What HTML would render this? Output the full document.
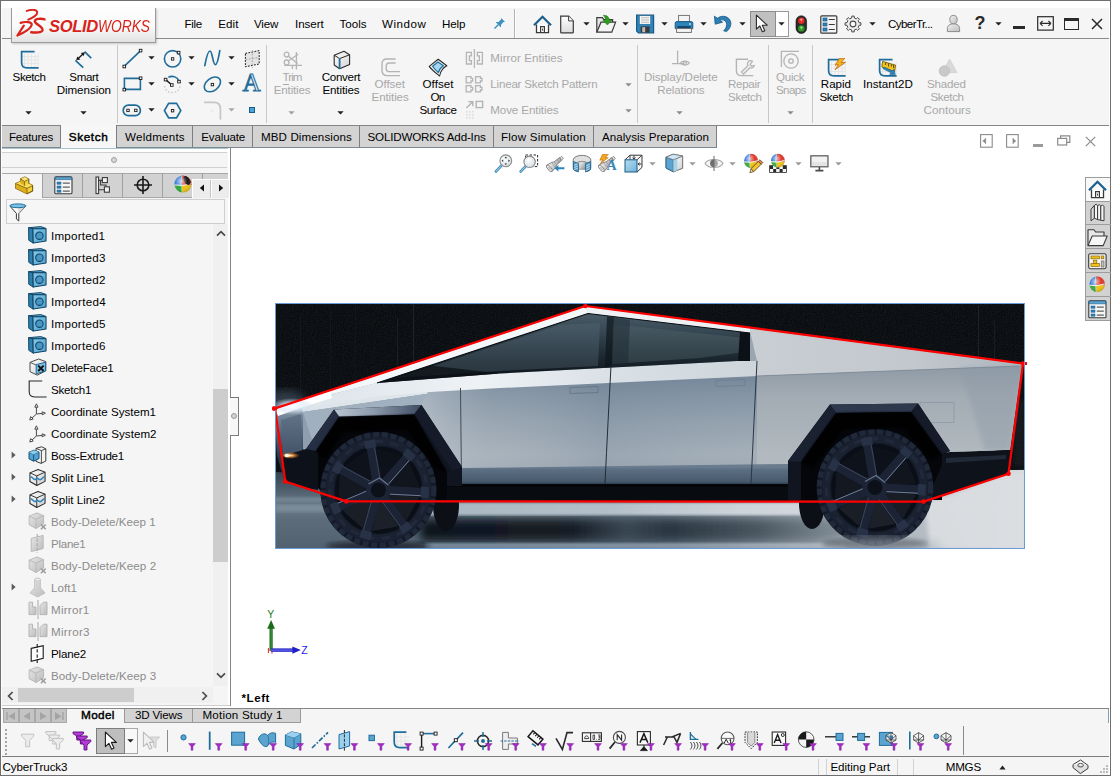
<!DOCTYPE html>
<html lang="en"><head><meta charset="utf-8"><title>SOLIDWORKS - CyberTruck3</title>
<style>
html,body{margin:0;padding:0;background:#fff;}
#app{position:relative;width:1111px;height:776px;overflow:hidden;background:#fff;font-family:"Liberation Sans",sans-serif;font-size:12px;color:#000;}
#app div,#app span,#app svg{position:absolute;box-sizing:border-box;}
.t{white-space:pre;line-height:16px;height:16px;}
.f5{background:#f5f5f5;}
.tab{background:#d3d3d3;border-right:1px solid #7e7e7e;}
.vsep{width:1px;background:#c8c8c8;}

</style></head>
<body>
<div id="app">
<!-- window frame -->
<div style="left:0;top:0;width:1111px;height:776px;border:1px solid #6f6f6f;"></div>
<!-- menu bar -->
<div class="f5" style="left:2px;top:8px;width:1108px;height:30px;"></div>
<div style="left:1px;top:38px;width:1109px;height:1px;background:#8a8a8a;"></div>
<!-- command manager -->
<div class="f5" style="left:2px;top:39px;width:1108px;height:86px;"></div>
<div style="left:1px;top:125px;width:1109px;height:1px;background:#858585;"></div>
<!-- logo box -->
<div style="left:11px;top:8px;width:145px;height:35px;border:1px solid #9a9a9a;border-top:none;background:linear-gradient(#fdfdfd 0%,#fafafa 55%,#e2e2e2 100%);box-shadow:1px 1px 2px rgba(0,0,0,.18);"></div>
<div style="left:38px;top:8px;width:1px;height:30px;background:#8a8a8a;display:none"></div>
<!-- menu separator -->
<div style="left:514px;top:9px;width:1px;height:29px;background:#b4b4b4;"></div>
<div style="left:515px;top:9px;width:1px;height:29px;background:#fff;"></div>
<!-- select button highlighted -->
<div style="left:750px;top:11px;width:39px;height:26px;border:1px solid #9a9a9a;background:#fff;"></div>
<div style="left:750px;top:11px;width:26px;height:26px;border:1px solid #8c8c8c;background:#c0c0c0;"></div>
<!-- CM separators -->
<div class="vsep" style="left:117px;top:45px;height:78px;"></div>
<div class="vsep" style="left:266px;top:45px;height:78px;"></div>
<div class="vsep" style="left:637px;top:45px;height:78px;"></div>
<div class="vsep" style="left:768px;top:45px;height:78px;"></div>
<div class="vsep" style="left:812px;top:45px;height:78px;"></div>
<!-- CM tabs row -->
<div style="left:1px;top:126px;width:1109px;height:22px;background:#fff;"></div>
<div class="tab" style="left:1px;top:126px;width:60px;height:21px;"></div>
<div class="tab" style="left:117px;top:126px;width:76px;height:21px;"></div>
<div class="tab" style="left:193px;top:126px;width:60px;height:21px;"></div>
<div class="tab" style="left:253px;top:126px;width:107px;height:21px;"></div>
<div class="tab" style="left:360px;top:126px;width:134px;height:21px;"></div>
<div class="tab" style="left:494px;top:126px;width:100px;height:21px;"></div>
<div class="tab" style="left:594px;top:126px;width:123px;height:21px;"></div>
<div style="left:1px;top:147px;width:716px;height:1px;background:#7e8890;"></div>
<div style="left:61px;top:125px;width:56px;height:24px;background:#f7f7f7;border-right:1px solid #7e7e7e;"></div>
<div style="left:2px;top:148px;width:226px;height:1px;background:#a9c4cf;"></div>
<!-- left panel -->
<div class="f5" style="left:1px;top:152px;width:228px;height:553px;"></div>
<div style="left:2px;top:152px;width:225px;height:1px;background:#d0d0d0;"></div>
<div style="left:2px;top:167px;width:225px;height:1px;background:#d0d0d0;"></div>
<div style="left:111px;top:157px;width:6px;height:6px;border-radius:50%;background:#d6d6d6;border:1px solid #a0a0a0;"></div>

<div style="left:228px;top:148px;width:2px;height:560px;background:#fff;"></div><div style="left:230px;top:148px;width:1px;height:560px;background:#858585;"></div>
<!-- splitter handle -->
<div style="left:230px;top:397px;width:9px;height:39px;border:1px solid #7a7a7a;border-left:none;background:#f7f7f7;"></div>
<div style="left:231px;top:413px;width:6px;height:6px;border-radius:50%;background:#d2d2d2;border:1px solid #9a9a9a;"></div>
<!-- FM icon tabs -->
<div style="left:2px;top:173px;width:226px;height:25px;background:#d2d2d2;border-top:1px solid #a8a8a8;border-bottom:1px solid #a8a8a8;"></div>
<div style="left:2px;top:173px;width:41px;height:26px;background:#f5f5f5;border-top:1px solid #a8a8a8;"></div>
<div style="left:42px;top:173px;width:1px;height:25px;background:#a0a0a0;"></div>
<div style="left:82px;top:173px;width:1px;height:25px;background:#a0a0a0;"></div>
<div style="left:122px;top:173px;width:1px;height:25px;background:#a0a0a0;"></div>
<div style="left:162px;top:173px;width:1px;height:25px;background:#a0a0a0;"></div>
<div style="left:202px;top:173px;width:1px;height:25px;background:#a0a0a0;"></div>
<div style="left:192px;top:179px;width:19px;height:19px;background:#f3f3f3;border:1px solid #b8b8b8;"></div>
<div style="left:210px;top:179px;width:18px;height:19px;background:#f3f3f3;border:1px solid #b8b8b8;"></div>
<!-- filter box -->
<div style="left:6px;top:199px;width:219px;height:25px;border:1px solid #cfcfcf;background:#f6f6f6;"></div>
<!-- tree scrollbar -->
<div style="left:213px;top:224px;width:15px;height:462px;background:#f0f0f0;"></div>
<div style="left:213px;top:389px;width:15px;height:173px;background:#cdcdcd;"></div>
<!-- tree h scrollbar -->
<div style="left:2px;top:687px;width:211px;height:16px;background:#f0f0f0;"></div>
<div style="left:18px;top:688px;width:116px;height:14px;background:#cdcdcd;"></div>
<!-- task pane tabs right -->
<div style="left:1085px;top:177px;width:25px;height:144px;background:#d2d2d2;border:1px solid #9c9c9c;border-right:none;"></div>
<div style="left:1086px;top:178px;width:24px;height:23px;background:#f8f8f8;"></div>
<div style="left:1085px;top:201px;width:26px;height:1px;background:#9c9c9c;"></div>
<div style="left:1085px;top:224px;width:26px;height:1px;background:#9c9c9c;"></div>
<div style="left:1085px;top:248px;width:26px;height:1px;background:#9c9c9c;"></div>
<div style="left:1085px;top:272px;width:26px;height:1px;background:#9c9c9c;"></div>
<div style="left:1085px;top:296px;width:26px;height:1px;background:#9c9c9c;"></div>
<!-- bottom area -->
<div class="f5" style="left:1px;top:706px;width:1109px;height:18px;"></div>
<div style="left:1px;top:705px;width:229px;height:1px;background:#cfcfcf;"></div>
<div style="left:1px;top:706px;width:229px;height:2px;background:#fff;"></div>
<div style="left:231px;top:706px;width:879px;height:2px;background:#fff;"></div>
<div style="left:1px;top:708px;width:1108px;height:1px;background:#858585;"></div>
<div style="left:1108px;top:709px;width:1px;height:14px;background:#7fa0b0;"></div>
<div style="left:124px;top:709px;width:69px;height:14px;background:#d3d3d3;border:1px solid #9a9a9a;border-top:none;"></div>
<div style="left:192px;top:709px;width:109px;height:14px;background:#d3d3d3;border:1px solid #9a9a9a;border-top:none;"></div>
<div class="f5" style="left:1px;top:724px;width:1109px;height:32px;"></div>
<div style="left:1px;top:756px;width:1109px;height:1px;background:#7c7c7c;"></div>
<div class="f5" style="left:1px;top:757px;width:1109px;height:18px;"></div>
<div style="left:1109px;top:126px;width:1px;height:51px;background:#fff;"></div><div style="left:1109px;top:321px;width:1px;height:387px;background:#fff;"></div>
<div style="left:283px;top:84px;width:6px;height:1px;background:#a8a8a8;"></div>
<div style="left:1px;top:1px;width:1px;height:774px;background:#fff;"></div>
<div style="left:1109px;top:1px;width:1px;height:125px;background:#fff;"></div>
<div style="left:1109px;top:709px;width:1px;height:66px;background:#fff;"></div>

<!-- sketch picture: truck -->
<svg style="left:275px;top:303px;width:750px;height:246px;" width="750" height="246" viewBox="275 303 750 246">
<defs>
<filter id="nz" x="0" y="0" width="100%" height="100%"><feTurbulence type="fractalNoise" baseFrequency="0.9" numOctaves="2" seed="3" result="n"/><feColorMatrix in="n" type="matrix" values="0 0 0 0 0.16  0 0 0 0 0.19  0 0 0 0 0.22  0.7 0.7 0.7 0 -0.82"/></filter>
<filter id="b1"><feGaussianBlur stdDeviation="1"/></filter>
<filter id="b2"><feGaussianBlur stdDeviation="2.2"/></filter>
<filter id="b4"><feGaussianBlur stdDeviation="4"/></filter>
<filter id="b8"><feGaussianBlur stdDeviation="8"/></filter>
<linearGradient id="gfloor" x1="0" y1="0" x2="0" y2="1"><stop offset="0" stop-color="#33404c"/><stop offset=".22" stop-color="#4b5a69"/><stop offset=".46" stop-color="#6d7d8a"/><stop offset=".62" stop-color="#5c6c7a"/><stop offset="1" stop-color="#526170"/></linearGradient>
<linearGradient id="gfloorR" x1="0" y1="0" x2="1" y2="0"><stop offset="0" stop-color="#cfd4d9" stop-opacity="0"/><stop offset=".55" stop-color="#cfd4d9" stop-opacity=".6"/><stop offset="1" stop-color="#d8dbdf" stop-opacity="1"/></linearGradient>
<linearGradient id="gside" x1="0" y1="376" x2="0" y2="468" gradientUnits="userSpaceOnUse"><stop offset="0" stop-color="#74869a"/><stop offset=".2" stop-color="#8494a4"/><stop offset=".5" stop-color="#97a4b0"/><stop offset=".85" stop-color="#a9b3bc"/><stop offset="1" stop-color="#a5afb9"/></linearGradient>
<linearGradient id="gside2" x1="420" y1="0" x2="1020" y2="0" gradientUnits="userSpaceOnUse"><stop offset="0" stop-color="#c8d0d8" stop-opacity=".55"/><stop offset=".12" stop-color="#aab4be" stop-opacity=".15"/><stop offset=".3" stop-color="#6d8094" stop-opacity=".25"/><stop offset=".55" stop-color="#8494a4" stop-opacity=".12"/><stop offset="1" stop-color="#c0c6cc" stop-opacity=".4"/></linearGradient>
<linearGradient id="grear" x1="0" y1="366" x2="0" y2="455" gradientUnits="userSpaceOnUse"><stop offset="0" stop-color="#8f9aa5"/><stop offset=".35" stop-color="#a3acb4"/><stop offset="1" stop-color="#b2b9bf"/></linearGradient>
<linearGradient id="gupper" x1="750" y1="0" x2="1022" y2="0" gradientUnits="userSpaceOnUse"><stop offset="0" stop-color="#c9ced3"/><stop offset=".6" stop-color="#c2c8cd"/><stop offset="1" stop-color="#aeb6be"/></linearGradient>
<linearGradient id="gband" x1="330" y1="0" x2="760" y2="0" gradientUnits="userSpaceOnUse"><stop offset="0" stop-color="#dfe6ec"/><stop offset=".35" stop-color="#eef2f5"/><stop offset=".65" stop-color="#d9e0e6"/><stop offset="1" stop-color="#cdd4da"/></linearGradient>
<linearGradient id="glow" x1="0" y1="467" x2="0" y2="485" gradientUnits="userSpaceOnUse"><stop offset="0" stop-color="#6a7c8e"/><stop offset=".15" stop-color="#5c6e82"/><stop offset=".8" stop-color="#485a6e"/><stop offset="1" stop-color="#2a3846"/></linearGradient>
<linearGradient id="gwin" x1="0" y1="313" x2="0" y2="375" gradientUnits="userSpaceOnUse"><stop offset="0" stop-color="#4a5c68"/><stop offset=".35" stop-color="#33444f"/><stop offset=".7" stop-color="#1c2931"/><stop offset="1" stop-color="#0e161c"/></linearGradient>
<linearGradient id="gfas" x1="0" y1="408" x2="0" y2="458" gradientUnits="userSpaceOnUse"><stop offset="0" stop-color="#c5d2de"/><stop offset=".15" stop-color="#77889a"/><stop offset=".6" stop-color="#4d5d70"/><stop offset="1" stop-color="#2b3644"/></linearGradient>
<radialGradient id="gtyre"><stop offset="0" stop-color="#0b0f16"/><stop offset=".55" stop-color="#10151e"/><stop offset=".62" stop-color="#1b2230"/><stop offset=".8" stop-color="#232c3c"/><stop offset=".93" stop-color="#1c2432"/><stop offset="1" stop-color="#0d1118"/></radialGradient>
<radialGradient id="gglare"><stop offset="0" stop-color="#fff" stop-opacity="1"/><stop offset=".4" stop-color="#e8f2ff" stop-opacity=".8"/><stop offset="1" stop-color="#bcd" stop-opacity="0"/></radialGradient>
<radialGradient id="gorange"><stop offset="0" stop-color="#fff4d8"/><stop offset=".35" stop-color="#f6a14a" stop-opacity=".9"/><stop offset="1" stop-color="#c45a10" stop-opacity="0"/></radialGradient>
<linearGradient id="gstrip" x1="425" y1="0" x2="845" y2="0" gradientUnits="userSpaceOnUse"><stop offset="0" stop-color="#a9b7c2"/><stop offset=".45" stop-color="#b4c0c9"/><stop offset=".75" stop-color="#cdd4da"/><stop offset="1" stop-color="#d4d9de"/></linearGradient>
<linearGradient id="gstrip2" x1="425" y1="0" x2="845" y2="0" gradientUnits="userSpaceOnUse"><stop offset="0" stop-color="#77899a"/><stop offset=".6" stop-color="#8a99a6"/><stop offset="1" stop-color="#b4bcc4"/></linearGradient>
<linearGradient id="gshad" x1="420" y1="0" x2="850" y2="0" gradientUnits="userSpaceOnUse"><stop offset="0" stop-color="#0f161e"/><stop offset=".35" stop-color="#141c25"/><stop offset=".48" stop-color="#3a4753"/><stop offset=".58" stop-color="#2a3641"/><stop offset=".78" stop-color="#48555f"/><stop offset="1" stop-color="#8a959e"/></linearGradient>
<linearGradient id="gfl" x1="334" y1="0" x2="421" y2="0" gradientUnits="userSpaceOnUse"><stop offset="0" stop-color="#b9c5d0"/><stop offset=".45" stop-color="#8d9bad"/><stop offset="1" stop-color="#3f4c63"/></linearGradient>
</defs>
<rect x="275" y="303" width="750" height="246" fill="#090c0f"/>
<rect x="275" y="303" width="750" height="200" filter="url(#nz)" opacity=".2"/>
<rect x="397" y="318" width="1" height="48" fill="#5a6670" opacity="0.18"/>
<rect x="413" y="304" width="1" height="64" fill="#5a6670" opacity="0.24"/>
<rect x="300" y="315" width="1" height="85" fill="#5a6670" opacity="0.1"/>
<rect x="330" y="310" width="1" height="85" fill="#5a6670" opacity="0.08"/>
<rect x="978" y="305" width="1" height="55" fill="#5a6670" opacity="0.22"/>
<rect x="994" y="320" width="1" height="42" fill="#5a6670" opacity="0.16"/>
<rect x="355" y="305" width="1" height="75" fill="#5a6670" opacity="0.06"/>
<ellipse cx="286" cy="404" rx="20" ry="14" fill="#52667a" opacity=".5" filter="url(#b4)"/>
<polygon points="275,472 330,474 1025,470 1025,549 275,549" fill="url(#gfloor)"/>
<rect x="275" y="505" width="60" height="7" fill="#8fa0ad" opacity=".5" filter="url(#b2)"/>
<rect x="275" y="497" width="48" height="5" fill="#8294a4" opacity=".5" filter="url(#b1)"/>
<rect x="640" y="470" width="385" height="79" fill="url(#gfloorR)"/>
<polygon points="925,503 1009,474 1025,472 1025,549 930,549" fill="#dcdfe2" opacity=".9" filter="url(#b2)"/>
<rect x="425" y="503" width="420" height="12" fill="url(#gstrip)" filter="url(#b1)"/>
<rect x="420" y="519" width="430" height="22" fill="url(#gshad)" filter="url(#b4)"/>
<rect x="425" y="543" width="420" height="6" fill="url(#gstrip2)" opacity=".9" filter="url(#b1)"/>
<ellipse cx="446" cy="505" rx="13" ry="26" fill="#0c1016"/>
<ellipse cx="812" cy="503" rx="13" ry="26" fill="#0c1016"/>
<rect x="1014" y="400" width="11" height="66" fill="#1a2026" opacity=".6" filter="url(#b2)"/>
<polygon points="276,409 585.5,306.5 1022.5,364 1010,450 950,452 788,484 461,485 303,458 277,456" fill="#9aa5af"/>
<polygon points="276,409 303,401 304,458 285,482 277,456" fill="url(#gfas)"/>
<polygon points="281,420 301,414 302,452 283,455" fill="#52637a" opacity=".6"/>
<polygon points="276,409 585.5,306.5 589,313 377,383 300,402 277,414" fill="#f4f7f9"/>
<polygon points="300,402 377,383 500,373 500,386 440,392 303,412" fill="#dde5eb"/>
<polygon points="303,412 440,392 500,386 500,404 334,410 306,449 303,449" fill="#8e9eae"/>
<polygon points="303,412 440,392 470,390 420,405.5 334,410 312,440" fill="#a9b8c6" opacity=".7"/>
<polygon points="421,405 430,388 500,386 757,376 790,375 790,466 461,468" fill="url(#gside)"/>
<polygon points="421,405 430,388 500,386 757,376 790,375 790,466 461,468" fill="url(#gside2)"/>
<polygon points="377,383 500,373.5 737,361 757,361 757,376 500,388 430,392 372,397 330,404 303,411 303,402" fill="url(#gband)"/>
<polygon points="585.5,306.5 1022.5,364 1021,366 757,376 757,361 750,331 589,313" fill="url(#gupper)"/>
<polygon points="585.5,306.5 750,328.5 750,333 589,313.5" fill="#eef1f3"/>
<polygon points="757,376 1021,366 1010,450 950,452 918,404 830,405 788,462 788,484 757,484" fill="url(#grear)"/>
<polygon points="960,368 1021,366 1010,450 985,451" fill="#8e9ba8" opacity=".45" filter="url(#b2)"/>
<polygon points="461,468 620,466 790,464 790,485 461,485" fill="url(#glow)"/>
<polygon points="440,484 800,484 800,502 440,502" fill="#080b10"/>
<rect x="440" y="484" width="360" height="3" fill="#04060a"/>
<polygon points="377,383 588,313.5 750,333 750,360.5 737,361 500,373.5" fill="url(#gwin)"/>
<polygon points="395,378 560,325 600,323 598,366 500,371" fill="#5b6e7a" opacity=".35"/>
<polygon points="612,324 745,338 745,352 700,358 612,364" fill="#55666f" opacity=".4"/>
<polygon points="607,316.5 614,317.5 612,367 605,367.5" fill="#0d151b" opacity=".7"/><polygon points="614,317.5 630,320 628,366 612,367" fill="#1a262e" opacity=".45"/>
<polygon points="377,383 430,365.5 470,370 500,373.5" fill="#0a1014" opacity=".7"/>
<polygon points="740,332 750,333 750,361 738,361" fill="#0b1116"/>
<polyline points="377,383 588,313.5 750,333" fill="none" stroke="#0a0f14" stroke-width="1.2"/>
<path d="M460.5,388 L461.5,484" stroke="#3e4c59" stroke-width="1" fill="none"/>
<path d="M611,366 Q608,420 605,484" stroke="#222d38" stroke-width="1" fill="none"/>
<path d="M757,361 Q754,420 751,484" stroke="#2a3642" stroke-width="1" fill="none"/>
<rect x="570" y="387" width="28" height="6" fill="none" stroke="#5d6f80" stroke-width=".7" transform="rotate(-2 584 390)"/>
<rect x="716" y="380" width="29" height="6" fill="none" stroke="#6d7e8e" stroke-width=".7" transform="rotate(-2 730 383)"/>
<rect x="920" y="402.5" width="34" height="20" fill="none" stroke="#8c98a3" stroke-width=".8"/>
<line x1="757" y1="376" x2="1021" y2="366" stroke="#7b8894" stroke-width=".8"/>
<polygon points="306,449 334,409.5 421.5,405 462,467 462,486 440,486 440,470 412,418 340,421 318,452 312,486 306,486" fill="#10151f"/>
<polygon points="334,409.5 421.5,405 414,414.5 339,416.5" fill="url(#gfl)"/>
<polygon points="306,449 334,409.5 339,416.5 316,451" fill="#252e42"/>
<polygon points="421.5,405 462,467 453,471 414,414.5" fill="#151b29"/>
<polygon points="316,451 339,417.5 414,414.5 447,472 447,500 330,500 316,486" fill="#04060a"/>
<polygon points="283,456 306,449 318,452 318,490 300,487 285,482" fill="#0d1119"/>
<polygon points="788,461 830,404.5 918,403.5 950,451 944,454 1010,450 1008.5,474 925,502 800,502 788,502" fill="#10151f"/>
<polygon points="830,404.5 918,403.5 911,412 836,413" fill="#2e394e"/>
<polygon points="788,461 830,404.5 836,413 801,462" fill="#1a2131"/>
<polygon points="918,403.5 950,451 942,454 911,412" fill="#151b29"/>
<polygon points="801,462 836,413 911,412 942,455 942,500 801,500" fill="#04060a"/>
<polygon points="944,454 1010,450 1008.5,474 925,502 940,470" fill="#0e121b"/>
<polygon points="946,458 1006,455 1006,459 946,463" fill="#2a3345" opacity=".7"/>
<g>
<ellipse cx="378.4" cy="546" rx="52.2" ry="5" fill="#0a0e14" opacity=".6" filter="url(#b2)"/>
<circle cx="378.4" cy="490" r="58" fill="#131926"/>
<circle cx="378.4" cy="490" r="55.4" fill="none" stroke="#20293a" stroke-width="5.2" stroke-dasharray="6.2 2.6"/>
<circle cx="378.4" cy="490" r="48.5" fill="none" stroke="#1a2130" stroke-width="8"/>
<circle cx="378.4" cy="490" r="48.5" fill="none" stroke="#262f43" stroke-width="3" stroke-dasharray="9 7" opacity=".6"/>
<circle cx="378.4" cy="490" r="43.5" fill="#0a0e16"/>
<polygon points="376.1,448.6 401.9,455.8 383.7,478.1 380.0,477.1" fill="#0c111a"/>
<polygon points="409.4,462.4 419.8,487.1 391.0,486.8 389.5,483.2" fill="#10151e"/>
<polygon points="419.3,497.0 406.5,520.6 388.8,497.8 390.6,494.5" fill="#171c25"/>
<polygon points="398.4,526.4 372.0,531.0 378.7,503.0 382.5,502.3" fill="#1b2029"/>
<polygon points="362.5,528.3 342.4,510.6 368.4,498.4 371.3,500.9" fill="#191e27"/>
<polygon points="338.5,501.4 339.8,474.7 365.7,487.4 365.5,491.3" fill="#131821"/>
<polygon points="344.6,465.9 366.4,450.3 372.5,478.4 369.3,480.7" fill="#0d121b"/>
<line x1="376.8" y1="481.1" x2="370.7" y2="446.2" stroke="#1b2334" stroke-width="9"/>
<line x1="380.4" y1="480.5" x2="374.2" y2="445.6" stroke="#8a9bb4" stroke-width="1" opacity="0.3"/>
<rect x="366.3" y="438.7" width="8" height="11" fill="#283247" transform="rotate(-100.0 370.3 444.2)"/>
<line x1="384.4" y1="483.3" x2="407.8" y2="456.6" stroke="#1b2334" stroke-width="9"/>
<line x1="387.1" y1="485.6" x2="410.5" y2="459.0" stroke="#8a9bb4" stroke-width="1" opacity="0.75"/>
<rect x="405.2" y="449.6" width="8" height="11" fill="#283247" transform="rotate(-48.6 409.2 455.1)"/>
<line x1="387.4" y1="490.4" x2="422.8" y2="492.2" stroke="#1b2334" stroke-width="9"/>
<line x1="387.2" y1="494.0" x2="422.7" y2="495.8" stroke="#8a9bb4" stroke-width="1" opacity="0.75"/>
<rect x="420.8" y="486.8" width="8" height="11" fill="#283247" transform="rotate(2.9 424.8 492.3)"/>
<line x1="383.7" y1="497.3" x2="404.4" y2="526.1" stroke="#1b2334" stroke-width="9"/>
<line x1="380.7" y1="499.4" x2="401.5" y2="528.2" stroke="#8a9bb4" stroke-width="1" opacity="0.3"/>
<rect x="401.5" y="522.3" width="8" height="11" fill="#283247" transform="rotate(54.3 405.5 527.8)"/>
<line x1="376.0" y1="498.7" x2="366.3" y2="532.8" stroke="#1b2334" stroke-width="9"/>
<line x1="372.5" y1="497.7" x2="362.9" y2="531.9" stroke="#8a9bb4" stroke-width="1" opacity="0.3"/>
<rect x="361.8" y="529.3" width="8" height="11" fill="#283247" transform="rotate(105.7 365.8 534.8)"/>
<line x1="370.1" y1="493.5" x2="337.4" y2="507.3" stroke="#1b2334" stroke-width="9"/>
<line x1="368.7" y1="490.2" x2="336.0" y2="504.0" stroke="#8a9bb4" stroke-width="1" opacity="0.75"/>
<rect x="331.6" y="502.6" width="8" height="11" fill="#283247" transform="rotate(157.1 335.6 508.1)"/>
<line x1="370.5" y1="485.7" x2="339.3" y2="468.7" stroke="#1b2334" stroke-width="9"/>
<line x1="372.2" y1="482.5" x2="341.0" y2="465.6" stroke="#8a9bb4" stroke-width="1" opacity="0.3"/>
<rect x="333.6" y="462.3" width="8" height="11" fill="#283247" transform="rotate(208.6 337.6 467.8)"/>
<polygon points="381.9,477.5 390.4,485.0 389.8,496.2 380.7,502.8 369.8,499.7 365.4,489.4 370.8,479.4" fill="#1c2435"/>
<circle cx="378.4" cy="490" r="7.5" fill="#0c1119"/>
<path d="M368.4,484 L379.4,478 L388.4,485" stroke="#7d90aa" stroke-width="1.3" fill="none" opacity=".75"/>
</g>
<g>
<ellipse cx="875" cy="543.8" rx="52.47" ry="5" fill="#0a0e14" opacity=".6" filter="url(#b2)"/>
<circle cx="875" cy="487.5" r="58.3" fill="#131926"/>
<circle cx="875" cy="487.5" r="55.699999999999996" fill="none" stroke="#20293a" stroke-width="5.2" stroke-dasharray="6.2 2.6"/>
<circle cx="875" cy="487.5" r="48.8" fill="none" stroke="#1a2130" stroke-width="8"/>
<circle cx="875" cy="487.5" r="48.8" fill="none" stroke="#262f43" stroke-width="3" stroke-dasharray="9 7" opacity=".6"/>
<circle cx="875" cy="487.5" r="43.8" fill="#0a0e16"/>
<polygon points="872.7,445.8 898.7,453.1 880.3,475.6 876.6,474.6" fill="#0c111a"/>
<polygon points="906.2,459.7 916.7,484.6 887.6,484.3 886.1,480.7" fill="#10151e"/>
<polygon points="916.2,494.6 903.3,518.3 885.4,495.3 887.2,492.0" fill="#171c25"/>
<polygon points="895.2,524.1 868.6,528.8 875.3,500.5 879.1,499.8" fill="#1b2029"/>
<polygon points="858.9,526.1 838.7,508.2 865.0,495.9 867.9,498.4" fill="#191e27"/>
<polygon points="834.8,499.0 836.2,472.0 862.3,484.9 862.1,488.8" fill="#131821"/>
<polygon points="840.9,463.3 862.9,447.5 869.1,475.9 865.9,478.2" fill="#0d121b"/>
<line x1="873.4" y1="478.6" x2="867.2" y2="443.4" stroke="#1b2334" stroke-width="9"/>
<line x1="877.0" y1="478.0" x2="870.8" y2="442.8" stroke="#8a9bb4" stroke-width="1" opacity="0.3"/>
<rect x="862.9" y="435.9" width="8" height="11" fill="#283247" transform="rotate(-100.0 866.9 441.4)"/>
<line x1="881.0" y1="480.8" x2="904.6" y2="453.9" stroke="#1b2334" stroke-width="9"/>
<line x1="883.7" y1="483.1" x2="907.3" y2="456.3" stroke="#8a9bb4" stroke-width="1" opacity="0.75"/>
<rect x="902.0" y="446.9" width="8" height="11" fill="#283247" transform="rotate(-48.6 906.0 452.4)"/>
<line x1="884.0" y1="487.9" x2="919.7" y2="489.7" stroke="#1b2334" stroke-width="9"/>
<line x1="883.8" y1="491.5" x2="919.6" y2="493.3" stroke="#8a9bb4" stroke-width="1" opacity="0.75"/>
<rect x="917.7" y="484.3" width="8" height="11" fill="#283247" transform="rotate(2.9 921.7 489.8)"/>
<line x1="880.3" y1="494.8" x2="901.2" y2="523.9" stroke="#1b2334" stroke-width="9"/>
<line x1="877.3" y1="496.9" x2="898.2" y2="526.0" stroke="#8a9bb4" stroke-width="1" opacity="0.3"/>
<rect x="898.3" y="520.0" width="8" height="11" fill="#283247" transform="rotate(54.3 902.3 525.5)"/>
<line x1="872.6" y1="496.2" x2="862.9" y2="530.6" stroke="#1b2334" stroke-width="9"/>
<line x1="869.1" y1="495.2" x2="859.4" y2="529.7" stroke="#8a9bb4" stroke-width="1" opacity="0.3"/>
<rect x="858.3" y="527.1" width="8" height="11" fill="#283247" transform="rotate(105.7 862.3 532.6)"/>
<line x1="866.7" y1="491.0" x2="833.7" y2="504.9" stroke="#1b2334" stroke-width="9"/>
<line x1="865.3" y1="487.7" x2="832.3" y2="501.6" stroke="#8a9bb4" stroke-width="1" opacity="0.75"/>
<rect x="827.9" y="500.2" width="8" height="11" fill="#283247" transform="rotate(157.1 831.9 505.7)"/>
<line x1="867.1" y1="483.2" x2="835.7" y2="466.1" stroke="#1b2334" stroke-width="9"/>
<line x1="868.8" y1="480.0" x2="837.4" y2="462.9" stroke="#8a9bb4" stroke-width="1" opacity="0.3"/>
<rect x="829.9" y="459.6" width="8" height="11" fill="#283247" transform="rotate(208.6 833.9 465.1)"/>
<polygon points="878.5,475.0 887.0,482.5 886.4,493.7 877.3,500.3 866.4,497.2 862.0,486.9 867.4,476.9" fill="#1c2435"/>
<circle cx="875" cy="487.5" r="7.5" fill="#0c1119"/>
<path d="M865,481.5 L876,475.5 L885,482.5" stroke="#7d90aa" stroke-width="1.3" fill="none" opacity=".75"/>
</g>
<polygon points="316,451 339,417.5 414,414.5 447,472 434,468 407,430 344,432 324,460" fill="#020305" opacity=".75" filter="url(#b1)"/>
<polygon points="801,462 836,413 911,412 942,455 930,460 903,428 843,429 813,468" fill="#020305" opacity=".75" filter="url(#b1)"/>
<ellipse cx="880" cy="546" rx="62" ry="9" fill="#a7b2bb" opacity=".55" filter="url(#b4)"/>
<polygon points="276,409 330,391 332,398 300,408 278,416" fill="#ffffff"/>
<ellipse cx="292" cy="406" rx="22" ry="8" fill="url(#gglare)"/>
<ellipse cx="290" cy="455.5" rx="10" ry="3.4" fill="url(#gorange)"/>
<ellipse cx="287" cy="455.5" rx="2.6" ry="1.8" fill="#fff6e0"/>
<polygon points="275,408.5 585.3,306 1023,363.5 1008.5,473.7 923.6,501.6 346.3,501.4 285.3,481.5" fill="none" stroke="#ff0000" stroke-width="2.2" stroke-linejoin="round"/>
<circle cx="275" cy="408.5" r="2.3" fill="#ff0000"/>
<circle cx="585.3" cy="306" r="2.3" fill="#ff0000"/>
<circle cx="1023" cy="363.5" r="2.3" fill="#ff0000"/>
<circle cx="1008.5" cy="473.7" r="2.3" fill="#ff0000"/>
<circle cx="923.6" cy="501.6" r="2.3" fill="#ff0000"/>
<circle cx="346.3" cy="501.4" r="2.3" fill="#ff0000"/>
<circle cx="285.3" cy="481.5" r="2.3" fill="#ff0000"/>
</svg>
<div style="left:275px;top:303px;width:750px;height:246px;border:1px solid #6a9bd8;"></div>
<div style="left:272px;top:406px;width:4px;height:5px;border-radius:2px;background:#f00;"></div>
<div style="left:1025px;top:362px;width:2px;height:3px;background:#f00;"></div>
<!-- logo -->
<svg style="left:16px;top:9px" width="31" height="29" viewBox="0 0 31 29" ><g fill="none" stroke="#d8241b" stroke-linecap="round" stroke-linejoin="round">
<path d="M10.8,1.9 C15,0.3 20.3,0.4 21.1,2.8 C21.8,5.4 17,8.6 12.3,10.6" stroke-width="2"/>
<path d="M4.6,13.9 C9,12.4 16.3,12.8 15.7,15.6 C15,19.6 7.5,24.2 1.4,26.5 L7.8,16.6" stroke-width="2.2"/>
<path d="M28.6,10.3 C24.5,9 18.8,9.9 18.8,12.3 C19,15.2 27.4,17.6 26.5,21.3 C25.8,23.5 19.5,23.9 15.2,23.3" stroke-width="2.4"/>
</g></svg>
<span class="t" style="left:49px;top:17px;font-size:16.6px;line-height:20px;height:20px;font-weight:700;font-style:italic;color:#d8241b;letter-spacing:-.35px;">SOLID</span>
<span class="t" style="left:98.2px;top:17px;font-size:16.6px;line-height:20px;height:20px;font-style:italic;color:#d8241b;transform-origin:0 0;transform:scaleX(.83);">WORKS</span>
<!-- menubar icons -->
<svg style="left:492px;top:17px" width="14" height="14" viewBox="0 0 14 14" ><g transform="rotate(45 7 7)"><path d="M4.2,1.2h5.6l-1,1.2v3.4l2,2.2H3.2l2-2.2V2.4z" fill="#3d90c2"/><path d="M7,8v5.4" stroke="#3d90c2" stroke-width="1.5"/></g></svg>
<svg style="left:532.5px;top:14.5px" width="19" height="19" viewBox="0 0 19 19" ><path d="M3.5,9.5V17.6h12V9.5" fill="#fff" stroke="#3a3a3a" stroke-width="1.3"/><path d="M7.6,17.4v-5.8h3.8v5.8" fill="none" stroke="#3a3a3a" stroke-width="1.2"/><path d="M9.6,13.6v2" stroke="#3a3a3a" stroke-width="1"/><path d="M1,10.2L9.5,1.8L18,10.2" fill="none" stroke="#1d5f8d" stroke-width="2.3" stroke-linejoin="miter"/></svg>
<svg style="left:559px;top:15px" width="16" height="19" viewBox="0 0 16 19" ><defs><linearGradient id="gdoc" x1="0" y1="0" x2="0" y2="1"><stop offset="0" stop-color="#fff"/><stop offset="1" stop-color="#dcdcdc"/></linearGradient></defs><path d="M1.7,1.2H9.6L14.3,5.9V17.2Q14.3,17.8 13.7,17.8H2.3Q1.7,17.8 1.7,17.2z" fill="url(#gdoc)" stroke="#3a3a3a" stroke-width="1.2"/><path d="M9.6,1.2V5.9H14.3" fill="#fff" stroke="#3a3a3a" stroke-width="1"/></svg>
<svg style="left:583.0px;top:22.0px" width="7" height="4" viewBox="0 0 7 4"><path d="M0.3,0.2h6.4L3.5,3.6z" fill="#222"/></svg>
<svg style="left:595px;top:14px" width="22" height="20" viewBox="0 0 22 20" ><path d="M1.8,18V3.6h5.6l1.6,2h8.6V8" fill="#e6e6e6" stroke="#3a3a3a" stroke-width="1.2"/><path d="M1.8,18.2L6,8.2H20.6L16.8,18.2z" fill="#f4f4f4" stroke="#3a3a3a" stroke-width="1.2"/><path d="M8.2,1.4C12,1 14,3 14.4,6.2H17L12.4,11L7.8,6.2H10.6C10.4,4 9.6,2.4 8.2,1.4z" fill="#2f9a1f" stroke="#1f7a12" stroke-width=".5"/></svg>
<svg style="left:622.0px;top:22.0px" width="7" height="4" viewBox="0 0 7 4"><path d="M0.3,0.2h6.4L3.5,3.6z" fill="#222"/></svg>
<svg style="left:635px;top:14px" width="20" height="20" viewBox="0 0 20 20" ><path d="M1.6,1.2H18.6V18.8H3.4L1.6,17z" fill="#2c84ba" stroke="#1a5a86" stroke-width="1.2"/><rect x="4.4" y="1.8" width="11.2" height="8.4" fill="#fbfbfb" stroke="#1a5a86" stroke-width=".5"/><path d="M6,3.8h8M6,6h8M6,8.2h8" stroke="#9a9a9a" stroke-width=".7"/><rect x="5.6" y="12.4" width="9" height="6.2" fill="#3a3a3a"/><rect x="7.2" y="13.2" width="3" height="5" fill="#b9b9b9"/></svg>
<svg style="left:661.0px;top:22.0px" width="7" height="4" viewBox="0 0 7 4"><path d="M0.3,0.2h6.4L3.5,3.6z" fill="#222"/></svg>
<svg style="left:674px;top:14px" width="20" height="20" viewBox="0 0 20 20" ><rect x="4.6" y="1.4" width="10.8" height="7" fill="#f4f4f4" stroke="#6a6a6a" stroke-width=".9"/><path d="M1.2,9.2Q1.2,7.6 2.8,7.6H17.2Q18.8,7.6 18.8,9.2V14.6H1.2z" fill="#2c84ba" stroke="#1a5a86" stroke-width="1"/><rect x="3.4" y="12" width="13.2" height="3" fill="#15476b"/><rect x="2.6" y="14.6" width="14.8" height="3.8" fill="#f4f4f4" stroke="#6a6a6a" stroke-width=".9"/><rect x="15" y="9.4" width="2" height="1.2" fill="#cfe8f6"/></svg>
<svg style="left:700.0px;top:22.0px" width="7" height="4" viewBox="0 0 7 4"><path d="M0.3,0.2h6.4L3.5,3.6z" fill="#222"/></svg>
<svg style="left:713px;top:14px" width="20" height="19" viewBox="0 0 20 19" ><path d="M1.4,2.2L2.2,10.2L9.6,8.2L6.9,6.3C10.6,4.6 14.6,7.6 13.4,12.2C13,13.8 12,15.4 10.6,16.8L13.6,17.6C16.6,15.2 18.6,11.4 17.6,7.6C16.2,2.6 9.6,0.4 4.4,4.2z" fill="#2c7fb3" stroke="#1a5a86" stroke-width=".8" stroke-linejoin="round"/></svg>
<svg style="left:738.5px;top:22.0px" width="7" height="4" viewBox="0 0 7 4"><path d="M0.3,0.2h6.4L3.5,3.6z" fill="#222"/></svg>
<svg style="left:755px;top:14px" width="14" height="19" viewBox="0 0 14 19" ><path d="M1.4,1.2V15.2L4.8,12L7.4,17.8L9.8,16.7L7.3,11.2H12.2z" fill="#fff" stroke="#2a2a2a" stroke-width="1.1" stroke-linejoin="round"/></svg>
<svg style="left:778.0px;top:22.0px" width="7" height="4" viewBox="0 0 7 4"><path d="M0.3,0.2h6.4L3.5,3.6z" fill="#222"/></svg>
<svg style="left:795px;top:14.5px" width="13" height="19" viewBox="0 0 13 19" ><rect x="1" y=".8" width="10.6" height="17.6" rx="5.2" fill="#2b2b2b" stroke="#111" stroke-width=".6"/><circle cx="6.3" cy="5.7" r="3.2" fill="#e02a1f"/><circle cx="6.3" cy="13.4" r="3.2" fill="#2c9a22"/><path d="M6.3,3.4v3M5,4.6h2.6" stroke="#ffb0a8" stroke-width=".8"/><path d="M6.3,11.2v3M5,12.4h2.6" stroke="#a8e8a0" stroke-width=".8"/></svg>
<svg style="left:819.5px;top:14.5px" width="18" height="19" viewBox="0 0 18 19" ><rect x=".8" y=".8" width="16" height="17.4" rx="1" fill="#f4f4f4" stroke="#3a3a3a" stroke-width="1.2"/><g fill="#2c84ba" stroke="#1a5a86" stroke-width=".7"><rect x="3" y="3" width="4" height="3"/><rect x="3" y="8" width="4" height="3"/><rect x="3" y="13" width="4" height="3"/></g><path d="M8.8,4.5h6M8.8,9.5h6M8.8,14.5h6" stroke="#3a3a3a" stroke-width="1.1"/></svg>
<svg style="left:844px;top:15px" width="18" height="18" viewBox="0 0 18 18" ><path d="M14.96,7.69 L16.91,7.81 L16.91,10.19 L14.96,10.31 L14.14,12.29 L15.44,13.75 L13.75,15.44 L12.29,14.14 L10.31,14.96 L10.19,16.91 L7.81,16.91 L7.69,14.96 L5.71,14.14 L4.25,15.44 L2.56,13.75 L3.86,12.29 L3.04,10.31 L1.09,10.19 L1.09,7.81 L3.04,7.69 L3.86,5.71 L2.56,4.25 L4.25,2.56 L5.71,3.86 L7.69,3.04 L7.81,1.09 L10.19,1.09 L10.31,3.04 L12.29,3.86 L13.75,2.56 L15.44,4.25 L14.14,5.71z" fill="#f0f0f0" stroke="#4a4a4a" stroke-width="1" stroke-linejoin="round"/><circle cx="9" cy="9" r="2.9" fill="#f8f8f8" stroke="#4a4a4a" stroke-width="1.1"/></svg>
<svg style="left:869.0px;top:22.0px" width="7" height="4" viewBox="0 0 7 4"><path d="M0.3,0.2h6.4L3.5,3.6z" fill="#222"/></svg>
<svg style="left:946px;top:14px" width="15" height="19" viewBox="0 0 15 19" ><defs><linearGradient id="gusr" x1="0" y1="0" x2="1" y2="1"><stop offset="0" stop-color="#f2f2f2"/><stop offset="1" stop-color="#bdbdbd"/></linearGradient></defs><path d="M1.4,17.6V14.4C1.4,11.4 4,9.8 7.5,9.8S13.6,11.4 13.6,14.4V17.6z" fill="url(#gusr)" stroke="#8c8c8c" stroke-width="1"/><ellipse cx="7.5" cy="5.6" rx="3.7" ry="4.2" fill="url(#gusr)" stroke="#8c8c8c" stroke-width="1"/></svg>
<span class="t" style="left:974.5px;top:12px;font-size:18px;line-height:22px;height:22px;font-weight:700;color:#2a2a2a;">?</span>
<svg style="left:994.5px;top:22.0px" width="7" height="4" viewBox="0 0 7 4"><path d="M0.3,0.2h6.4L3.5,3.6z" fill="#222"/></svg>
<div style="left:1013px;top:26px;width:12px;height:3px;background:#2a2a2a;"></div>
<svg style="left:1037px;top:16px" width="17" height="15" viewBox="0 0 17 15" ><rect x=".7" y=".7" width="15.6" height="13.4" fill="none" stroke="#2a2a2a" stroke-width="1.2"/><path d="M3,7.4h11M3,7.4l2.6,-2.4M3,7.4l2.6,2.4M14,7.4l-2.6,-2.4M14,7.4l-2.6,2.4" stroke="#2a2a2a" stroke-width="1.1" fill="none"/></svg>
<div style="left:1064px;top:18px;width:15px;height:12px;border:1px solid #2a2a2a;border-top-width:3px;"></div>
<svg style="left:1091px;top:18px" width="12" height="12" viewBox="0 0 12 12" ><path d="M1,1L11,11M11,1L1,11" stroke="#2a2a2a" stroke-width="1.5"/></svg>
<!-- CM icons -->
<svg style="left:19.5px;top:50px" width="20" height="20" viewBox="0 0 20 20" ><path d="M4.5,3.6v14M8,3.6v14M11.5,3.6v14M15,3.6v14M18.2,3.6v14M1.5,6.5h17M1.5,10h17M1.5,13.5h17" stroke="#e2e2e2" stroke-width=".8"/><path d="M14.6,1.6H1.6V12.4Q1.6,17.8 7,17.8H18.6" fill="none" stroke="#1f6d9b" stroke-width="1.7"/></svg>
<svg style="left:73.5px;top:50px" width="19" height="19" viewBox="0 0 19 19" ><path d="M10.6,1.6L17.2,8.2" stroke="#1f6d9b" stroke-width="1.7"/><path d="M1.4,10.4L9.2,17.6" stroke="#1f6d9b" stroke-width="1.7"/><path d="M3.4,9.2L9.8,3.2" stroke="#1a1a1a" stroke-width="1.4"/><path d="M2.2,10.2L3.2,6.4L6.4,9.6z M10.8,2.2L9.8,6L6.8,2.9z" fill="#1a1a1a"/></svg>
<svg style="left:25.0px;top:110.8px" width="7" height="4" viewBox="0 0 7 4"><path d="M0.3,0.2h6.4L3.5,3.6z" fill="#222"/></svg>
<svg style="left:79.9px;top:110.8px" width="7" height="4" viewBox="0 0 7 4"><path d="M0.3,0.2h6.4L3.5,3.6z" fill="#222"/></svg>
<svg style="left:121.5px;top:47.5px" width="21" height="21" viewBox="0 0 21 21" ><path d="M2.4,18.2L18.4,2.8" stroke="#1f6d9b" stroke-width="1.6"/><rect x="1.0" y="17.2" width="2.6" height="2.6" fill="#fff" stroke="#1a1a1a" stroke-width=".9"/><rect x="17.3" y="1.3" width="2.6" height="2.6" fill="#fff" stroke="#1a1a1a" stroke-width=".9"/></svg>
<svg style="left:148.0px;top:55.9px" width="7" height="4" viewBox="0 0 7 4"><path d="M0.3,0.2h6.4L3.5,3.6z" fill="#222"/></svg>
<svg style="left:121.5px;top:76px" width="21" height="17" viewBox="0 0 21 17" ><path d="M2.4,2.4H18.4V13.4H2.4z" fill="none" stroke="#1f6d9b" stroke-width="1.6"/><rect x="1.0" y="12.3" width="2.6" height="2.6" fill="#fff" stroke="#1a1a1a" stroke-width=".9"/><rect x="17.3" y="0.9" width="2.6" height="2.6" fill="#fff" stroke="#1a1a1a" stroke-width=".9"/></svg>
<svg style="left:148.0px;top:81.8px" width="7" height="4" viewBox="0 0 7 4"><path d="M0.3,0.2h6.4L3.5,3.6z" fill="#222"/></svg>
<svg style="left:122px;top:103.5px" width="20" height="13" viewBox="0 0 20 13" ><rect x="1.2" y="1.2" width="17.2" height="10.4" rx="5.2" fill="none" stroke="#1f6d9b" stroke-width="1.7"/><rect x="4.8" y="5.2" width="2.4" height="2.4" fill="#fff" stroke="#1a1a1a" stroke-width=".9"/><rect x="12.6" y="5.2" width="2.4" height="2.4" fill="#fff" stroke="#1a1a1a" stroke-width=".9"/></svg>
<svg style="left:148.0px;top:108.2px" width="7" height="4" viewBox="0 0 7 4"><path d="M0.3,0.2h6.4L3.5,3.6z" fill="#222"/></svg>
<svg style="left:162.5px;top:48.5px" width="20" height="19" viewBox="0 0 20 19" ><circle cx="9.6" cy="9.8" r="8.2" fill="none" stroke="#1f6d9b" stroke-width="1.6"/><rect x="8.4" y="8.7" width="2.4" height="2.4" fill="#fff" stroke="#1a1a1a" stroke-width=".9"/><rect x="14.3" y="2.3" width="2.6" height="2.6" fill="#fff" stroke="#1a1a1a" stroke-width=".9"/></svg>
<svg style="left:187.9px;top:55.9px" width="7" height="4" viewBox="0 0 7 4"><path d="M0.3,0.2h6.4L3.5,3.6z" fill="#222"/></svg>
<svg style="left:163px;top:74.5px" width="19" height="19" viewBox="0 0 19 19" ><path d="M1.6,11C2,15.4 5.4,17.6 9.4,17.6S16.6,15 17,11" fill="none" stroke="#cfcfcf" stroke-width="1.5" stroke-dasharray="1.6 1.8"/><path d="M5.4,2.2C9.6,0.2 14.6,2 16,6.2" fill="none" stroke="#1f6d9b" stroke-width="1.6"/><path d="M2.6,4.6L8.6,9.8" stroke="#1a1a1a" stroke-width="1.4"/><rect x="1.3" y="3.3" width="2.6" height="2.6" fill="#fff" stroke="#1a1a1a" stroke-width=".9"/><rect x="7.5" y="8.7" width="2.6" height="2.6" fill="#fff" stroke="#1a1a1a" stroke-width=".9"/><rect x="14.7" y="5.3" width="2.6" height="2.6" fill="#fff" stroke="#1a1a1a" stroke-width=".9"/></svg>
<svg style="left:187.9px;top:81.8px" width="7" height="4" viewBox="0 0 7 4"><path d="M0.3,0.2h6.4L3.5,3.6z" fill="#222"/></svg>
<svg style="left:162.5px;top:101.5px" width="20" height="18" viewBox="0 0 20 18" ><path d="M1.4,8.6L5.6,1.4H13.6L17.8,8.6L13.6,15.8H5.6z" fill="none" stroke="#1f6d9b" stroke-width="1.7" stroke-linejoin="round"/><rect x="8.4" y="7.5" width="2.4" height="2.4" fill="#fff" stroke="#1a1a1a" stroke-width=".9"/></svg>
<svg style="left:202.5px;top:49px" width="19" height="18" viewBox="0 0 19 18" ><path d="M1.8,16.6C3.4,8 5,1.8 7,2C9.6,2.2 9.6,15.6 12.4,15.6C14.6,15.6 15.6,8 16.8,1.6" fill="none" stroke="#1f6d9b" stroke-width="1.7" stroke-linecap="round"/></svg>
<svg style="left:227.9px;top:55.9px" width="7" height="4" viewBox="0 0 7 4"><path d="M0.3,0.2h6.4L3.5,3.6z" fill="#222"/></svg>
<svg style="left:202.5px;top:74.5px" width="19" height="19" viewBox="0 0 19 19" ><ellipse cx="9.4" cy="9.4" rx="9" ry="6.2" transform="rotate(-38 9.4 9.4)" fill="none" stroke="#1f6d9b" stroke-width="1.6"/><rect x="8.2" y="8.4" width="2.4" height="2.4" fill="#fff" stroke="#1a1a1a" stroke-width=".9"/></svg>
<svg style="left:227.9px;top:81.8px" width="7" height="4" viewBox="0 0 7 4"><path d="M0.3,0.2h6.4L3.5,3.6z" fill="#222"/></svg>
<svg style="left:202.5px;top:100.5px" width="19" height="19" viewBox="0 0 19 19" ><path d="M1,1.4H11Q17.4,1.4 17.4,8V18.4" fill="none" stroke="#c6c6c6" stroke-width="1.7"/><path d="M7.6,8.4l2.4,2.4M10,8.4l-2.4,2.4" stroke="#e0e0e0" stroke-width=".8"/></svg>
<svg style="left:227.9px;top:108.2px" width="7" height="4" viewBox="0 0 7 4"><path d="M0.3,0.2h6.4L3.5,3.6z" fill="#a8a8a8"/></svg>
<svg style="left:244px;top:48.5px" width="17" height="19" viewBox="0 0 17 19" ><path d="M1.4,4.4L15.2,1.6V15L1.4,17.8z" fill="#e4e4e4" stroke="#1a1a1a" stroke-width="1" stroke-dasharray="1.8 1.3"/><path d="M8.3,1v18M1.4,10.8L15.2,8.4" stroke="#9a9a9a" stroke-width=".8" stroke-dasharray="2 1.4"/></svg>
<span class="t" style="left:242.6px;top:69.5px;font-family:'Liberation Serif',serif;font-size:25px;line-height:26px;height:26px;color:#f5f5f5;-webkit-text-stroke:1.1px #1f6d9b;">A</span>
<div style="left:249px;top:107px;width:6px;height:6px;background:#4aa6d6;border:1px solid #1a5a86;"></div>
<svg style="left:282.5px;top:50.5px" width="20" height="19" viewBox="0 0 20 19" ><g fill="none" stroke="#b4b4b4" stroke-width="1.3"><circle cx="3.6" cy="3.6" r="2.4"/><circle cx="3.6" cy="11.4" r="2.4"/><path d="M5.4,5.2L14.6,12.6M5.4,9.8L15.2,3.2"/><path d="M1,14.4H19M13.4,1V18.4M9.4,14.4v3.6"/></g></svg>
<svg style="left:287.9px;top:110.8px" width="7" height="4" viewBox="0 0 7 4"><path d="M0.3,0.2h6.4L3.5,3.6z" fill="#a0a0a0"/></svg>
<svg style="left:332.5px;top:50px" width="18" height="20" viewBox="0 0 18 20" ><defs><linearGradient id="gcv" x1="0" y1="0" x2="1" y2="1"><stop offset="0" stop-color="#fff"/><stop offset="1" stop-color="#d4d4d4"/></linearGradient></defs><path d="M1.2,5.2L11,1.2L16.6,4.8V14.6L6.6,18.8L1.2,15z" fill="url(#gcv)" stroke="#2a2a2a" stroke-width="1.1" stroke-linejoin="round"/><path d="M1.2,5.2L6.6,8.6L16.6,4.8" fill="none" stroke="#2a2a2a" stroke-width="1"/><path d="M6.6,8.6V18.8" stroke="#1f6d9b" stroke-width="1.8"/></svg>
<svg style="left:336.8px;top:110.8px" width="7" height="4" viewBox="0 0 7 4"><path d="M0.3,0.2h6.4L3.5,3.6z" fill="#222"/></svg>
<svg style="left:380.5px;top:57.5px" width="20" height="19" viewBox="0 0 20 19" ><g fill="none" stroke="#b4b4b4" stroke-width="1.4"><path d="M14.6,1H6Q1,1 1,6V12Q1,17.6 6,17.6H19"/><path d="M14.6,5H8.4Q5.2,5 5.2,8.2V10.4Q5.2,13.6 8.4,13.6H19"/></g></svg>
<svg style="left:428px;top:57.5px" width="20" height="19" viewBox="0 0 20 19" ><path d="M1.2,8.4L10.2,1.2L18.8,7.8C16,9.2 12.6,13 11.6,18C8.6,15.6 4.4,12.6 1.2,8.4z" fill="#f0f0f0" stroke="#2a2a2a" stroke-width="1.1" stroke-linejoin="round"/><path d="M4.6,8.2L10,4L15.4,7.8C13.2,9.2 11.2,11.4 10.4,14.6C8.4,12.8 6.2,10.8 4.6,8.2z" fill="#a9d6ee" stroke="#1f6d9b" stroke-width="1.2" stroke-linejoin="round"/></svg>
<svg style="left:464.5px;top:48.5px" width="19" height="19" viewBox="0 0 19 19" ><g fill="none" stroke="#b4b4b4" stroke-width="1.3"><path d="M9.4,0v19"/><path d="M6.4,3.4H1.4V15H6.4V11.6H4.4V6.8H6.4z"/><path d="M12.4,3.4H17.4V15H12.4V11.6H14.4V6.8H12.4z"/></g></svg>
<svg style="left:464.5px;top:74.5px" width="19" height="19" viewBox="0 0 19 19" ><g fill="none" stroke="#b4b4b4" stroke-width="1.3"><path d="M1.2,1.6H6V3.4H7.6V6H6V7.8H1.2z"/><path d="M10.6,1.6H15.4V3.4H17V6H15.4V7.8H10.6z"/><path d="M1.2,10.6H6V12.4H7.6V15H6V16.8H1.2z"/><path d="M10.6,10.6H15.4V12.4H17V15H15.4V16.8H10.6z"/></g></svg>
<svg style="left:464.5px;top:100px" width="19" height="20" viewBox="0 0 19 20" ><g fill="none" stroke="#b4b4b4" stroke-width="1.4"><path d="M1.4,8L7.6,1.8M3.2,1.6H7.8V6.2"/><rect x="11.2" y="1.4" width="6.4" height="6.2"/></g><g fill="#dcdcdc"><rect x="1" y="11" width="1.6" height="1.6"/><rect x="4" y="11" width="1.6" height="1.6"/><rect x="7" y="11" width="1.6" height="1.6"/><rect x="1" y="14" width="1.6" height="1.6"/><rect x="4" y="14" width="1.6" height="1.6"/><rect x="7" y="14" width="1.6" height="1.6"/><rect x="1" y="17" width="1.6" height="1.6"/><rect x="4" y="17" width="1.6" height="1.6"/><rect x="7" y="17" width="1.6" height="1.6"/></g></svg>
<svg style="left:624.7px;top:82.5px" width="7" height="4" viewBox="0 0 7 4"><path d="M0.3,0.2h6.4L3.5,3.6z" fill="#8c8c8c"/></svg>
<svg style="left:624.7px;top:108.5px" width="7" height="4" viewBox="0 0 7 4"><path d="M0.3,0.2h6.4L3.5,3.6z" fill="#8c8c8c"/></svg>
<svg style="left:671px;top:50px" width="20" height="18" viewBox="0 0 20 18" ><g fill="none" stroke="#b4b4b4" stroke-width="1.3"><path d="M6.6,0.6V13.6M1,13.6H12"/><path d="M9.4,13C11,10.4 16.6,10.4 18.4,13C16.6,15.8 11,15.8 9.4,13z"/><circle cx="13.9" cy="13" r="1.5"/></g></svg>
<svg style="left:676.3px;top:110.8px" width="7" height="4" viewBox="0 0 7 4"><path d="M0.3,0.2h6.4L3.5,3.6z" fill="#8c8c8c"/></svg>
<svg style="left:734.5px;top:57.5px" width="20" height="19" viewBox="0 0 20 19" ><g fill="none" stroke="#b4b4b4" stroke-width="1.4"><path d="M13,1.2H1.4V12.4Q1.4,17.6 6.6,17.6H18.4"/><path d="M17.6,3.2C16,2 13.4,2.6 12.6,4.6C12.2,5.8 12.4,6.8 12.8,7.6L6.4,14L8.6,16.2L15,9.8C16.8,10.6 18.8,9.8 19.2,7.6L16.4,8.2L15.2,6.4z" stroke-width="1.2" fill="#ececec"/></g></svg>
<svg style="left:780px;top:49.5px" width="20" height="20" viewBox="0 0 20 20" ><g fill="none" stroke="#b4b4b4" stroke-width="1.3"><path d="M1.4,17V1.4H19"/><circle cx="11" cy="11" r="7.2"/><circle cx="11" cy="11" r="2.2"/></g></svg>
<svg style="left:787.1px;top:110.8px" width="7" height="4" viewBox="0 0 7 4"><path d="M0.3,0.2h6.4L3.5,3.6z" fill="#8c8c8c"/></svg>
<svg style="left:826.5px;top:57.5px" width="20" height="20" viewBox="0 0 20 20" ><path d="M4.5,3.6v14M8,3.6v14M11.5,3.6v14M15,3.6v14M18.2,3.6v14M1.5,6.5h17M1.5,10h17M1.5,13.5h17" stroke="#e2e2e2" stroke-width=".8"/><path d="M14.6,1.6H1.6V12.4Q1.6,17.8 7,17.8H18.6" fill="none" stroke="#1f6d9b" stroke-width="1.7"/><path d="M12.4,0.4L17.8,0.2L14.2,4.6L18.6,4.2L8.2,11.6L11.4,6.6L8,7.2z" fill="#f4b21c" stroke="#b4600c" stroke-width=".7" stroke-linejoin="round"/></svg>
<svg style="left:878px;top:57.5px" width="20" height="20" viewBox="0 0 20 20" ><path d="M4.5,3.6v14M8,3.6v14M11.5,3.6v14M15,3.6v14M18.2,3.6v14M1.5,6.5h17M1.5,10h17M1.5,13.5h17" stroke="#e2e2e2" stroke-width=".8"/><path d="M14.6,1.6H1.6V12.4Q1.6,17.8 7,17.8H18.6" fill="none" stroke="#1f6d9b" stroke-width="1.7"/><path d="M4.6,3.4L17.6,7.2L16.6,13.6L3.8,9z" fill="#f3c21c" stroke="#6a5200" stroke-width=".8"/><path d="M7.6,4.6V7M10.6,5.4V8.6M13.4,6.4V8.6M15.6,7V10" stroke="#3a2c00" stroke-width=".8"/><path d="M5,10.8L13,14.8L11.6,16.8L17.4,16.4L15.8,11.2L14.6,13L6,9z" fill="#2c84ba" stroke="#1a5a86" stroke-width=".5"/></svg>
<svg style="left:938px;top:57.5px" width="20" height="19" viewBox="0 0 20 19" ><path d="M11.6,1L19,14.6H4.2z" fill="#d9d9d9" stroke="#cfcfcf" stroke-width=".8"/><circle cx="6.4" cy="13" r="5.2" fill="#c9c9c9" stroke="#bdbdbd" stroke-width=".8"/></svg>
<!-- FeatureManager tab icons -->
<svg width="0" height="0" style="left:0;top:0"><defs>
<linearGradient id="gimp" x1="0" y1="0" x2="1" y2="1"><stop offset="0" stop-color="#86c8e8"/><stop offset="1" stop-color="#4e9ecb"/></linearGradient>
<linearGradient id="gcube" x1="0" y1="0" x2="1" y2="1"><stop offset="0" stop-color="#ffffff"/><stop offset="1" stop-color="#cfcfcf"/></linearGradient>
<linearGradient id="ggrey" x1="0" y1="0" x2="1" y2="1"><stop offset="0" stop-color="#e6e6e6"/><stop offset="1" stop-color="#bcbcbc"/></linearGradient>
<radialGradient id="gball" cx=".4" cy=".35" r=".7"><stop offset="0" stop-color="#fff" stop-opacity=".7"/><stop offset=".5" stop-color="#fff" stop-opacity="0"/><stop offset="1" stop-color="#000" stop-opacity=".25"/></radialGradient>
<symbol id="imp" viewBox="0 0 20 20"><path d="M0.6,1.8L13.5,0.6L19,2.6L5.2,2.8z" fill="#5aa8d0" stroke="#0f4466" stroke-width="1" stroke-linejoin="round"/><path d="M0.6,1.8L5.2,2.8L5.5,18L0.8,15z" fill="#2f7fae" stroke="#0f4466" stroke-width="1" stroke-linejoin="round"/><path d="M5.2,2.8H19V15.8L5.5,18z" fill="url(#gimp)" stroke="#0f4466" stroke-width="1.1" stroke-linejoin="round"/><circle cx="12" cy="10.2" r="3.9" fill="#4a96c2" stroke="#0f4466" stroke-width="1.1"/></symbol>
<symbol id="gcubex" viewBox="0 0 20 20"><path d="M1.2,4.4L9.4,1L16.4,3.8V12.6L8.4,17.4L1.2,13.4z" fill="url(#ggrey)" stroke="#b4b4b4" stroke-width=".9" stroke-linejoin="round"/><path d="M1.2,4.4L8.4,7.6L16.4,3.8M8.4,7.6V17.4" fill="none" stroke="#b4b4b4" stroke-width=".9"/><path d="M13.6,13.2L18.6,18.2M18.6,13.2L13.6,18.2" stroke="#9c9c9c" stroke-width="1.7"/></symbol>
<symbol id="mirr" viewBox="0 0 20 20"><path d="M10,0V19" stroke="#a8a8a8" stroke-width="1"/><path d="M1,2.2H4.6V7H8V14.6H1z" fill="url(#ggrey)" stroke="#b0b0b0" stroke-width=".9"/><path d="M19,2.2H15.4L12,5.6V14.6H19z" fill="url(#ggrey)" stroke="#b0b0b0" stroke-width=".9"/></symbol>
<symbol id="split" viewBox="0 0 18 19"><path d="M1,4.6L9.6,1L17,3.8V13.6L8.2,18L1,13.8z" fill="url(#gcube)" stroke="#2a2a2a" stroke-width="1.1" stroke-linejoin="round"/><path d="M1,4.6L8.2,7.8L17,3.8M8.2,7.8V18" fill="none" stroke="#2a2a2a" stroke-width="1"/><path d="M1.6,9.6C3.4,7.6 4.6,12.4 6.6,11.6C7.6,11.2 8,10.2 8.6,10.4C10.4,10.8 11,12.6 12.8,11.4C14.2,10.4 15.2,8.4 16.6,9" fill="none" stroke="#2c84ba" stroke-width="1.6"/></symbol>
<symbol id="csys" viewBox="0 0 18 18"><g fill="none" stroke="#4a4a4a" stroke-width="1"><path d="M7.4,11V3.4M7.4,11L13.4,10.4M7.4,11L2.6,15.4"/><path d="M7.4,0.8L5.8,4.2H9z" fill="#fff"/><path d="M16.4,10.2L13.2,8.8V11.8z" fill="#fff"/><path d="M0.8,17L1.6,13.6L4.2,16z" fill="#fff"/></g></symbol>
</defs></svg>
<svg style="left:14.5px;top:175.5px" width="19" height="19" viewBox="0 0 19 19" ><path d="M0.7,7.6L5.5,5.4V2.9L9.8,1L13.8,3.3V7.5L17.6,9.6V14.9L12,17.8L0.7,12.3z" fill="#f3d03a" stroke="#7a5c08" stroke-width="1.1" stroke-linejoin="round"/><path d="M5.5,2.9L9.8,1L13.8,3.3L9.5,5.4z" fill="#fbe680"/><path d="M0.7,7.6L5.5,5.4L9.5,7.6V9.7L13.8,7.5L17.6,9.6L12,12.4z" fill="#f9de5c"/><path d="M0.7,7.6L12,12.4V17.8L0.7,12.3z" fill="#dcae1c"/><path d="M5.5,2.9L9.5,5.4V9.6L5.5,7.6z" fill="#dcae1c"/><path d="M0.7,7.6L12,12.4L17.6,9.6M12,12.4V17.8M5.5,2.9L9.5,5.4L13.8,3.3M9.5,5.4V9.7" fill="none" stroke="#7a5c08" stroke-width=".8" stroke-linejoin="round"/></svg>
<svg style="left:53.5px;top:175.5px" width="19" height="19" viewBox="0 0 19 19" ><rect x=".8" y=".8" width="17.2" height="17" rx="1.4" fill="#f6f6f6" stroke="#3a3a3a" stroke-width="1.1"/><path d="M1.2,1.2H17.6V3.6H1.2z" fill="#5aa6d2" stroke="#1a5a86" stroke-width=".6"/><g fill="#2c84ba" stroke="#1a5a86" stroke-width=".5"><rect x="3" y="6" width="4" height="2.2"/><rect x="3" y="10" width="4" height="2.2"/><rect x="3" y="14" width="4" height="2.2"/></g><path d="M8.8,7.1h7M8.8,11.1h7M8.8,15.1h7" stroke="#3a3a3a" stroke-width="1"/></svg>
<svg style="left:95px;top:175.5px" width="16" height="19" viewBox="0 0 16 19" ><g fill="#f2f2f2" stroke="#3a3a3a" stroke-width="1.1"><rect x="1" y="1" width="2.6" height="16.6"/><path d="M3.6,4.4H7.4M3.6,13.8H9.4" /><rect x="7.4" y="1.6" width="5" height="5"/><rect x="9.4" y="10.8" width="5" height="5.4"/><path d="M5.6,4.4V9H11V10.6" fill="none"/></g></svg>
<svg style="left:133px;top:175px" width="20" height="20" viewBox="0 0 20 20" ><circle cx="10" cy="10" r="5.8" fill="none" stroke="#1a1a1a" stroke-width="1.6"/><path d="M10,1V19M1,10H19" stroke="#1a1a1a" stroke-width="1.6"/></svg>
<svg style="left:173.8px;top:174.6px" width="18" height="18" viewBox="0 0 18 18" ><clipPath id="cb173174"><circle cx="9.0" cy="9.0" r="8.6"/></clipPath><g clip-path="url(#cb173174)"><rect x="0" y="0" width="9.0" height="10.0" fill="#3a7ad8"/><rect x="8.0" y="0" width="10.0" height="10.0" fill="#dc3a2c"/><rect x="0" y="10.0" width="8.0" height="9.0" fill="#2ca836"/><rect x="8.0" y="10.0" width="11.0" height="9.0" fill="#f0c414"/><path d="M7.6,0 Q6.0,9.0 8.0,18" stroke="#f4f4f4" stroke-width=".7" opacity=".7" fill="none"/><path d="M0,10.0 Q9.0,11.4 18,8.6" stroke="#f4f4f4" stroke-width="1" fill="none"/><ellipse cx="12.959999999999999" cy="5.3999999999999995" rx="2.88" ry="4.86" transform="rotate(-28 12.959999999999999 5.3999999999999995)" fill="#1a1a1a"/><circle cx="9.0" cy="9.0" r="9.0" fill="url(#gball)"/></g></svg>
<div style="left:192px;top:179px;width:37px;height:19px;background:#ececec;border-left:1px solid #fff;border-top:1px solid #fff;"></div>
<div style="left:210px;top:180px;width:1px;height:18px;background:#c4c4c4;"></div><div style="left:211px;top:180px;width:1px;height:18px;background:#fff;"></div>
<svg style="left:198.5px;top:184px" width="6" height="8" viewBox="0 0 6 8" ><path d="M5,0.4V7.6L0.8,4z" fill="#111"/></svg>
<svg style="left:217.5px;top:184px" width="6" height="8" viewBox="0 0 6 8" ><path d="M1,0.4V7.6L5.2,4z" fill="#111"/></svg>
<svg style="left:8.5px;top:202.5px" width="18" height="19" viewBox="0 0 18 19" ><path d="M1.2,3.4L7.4,10.4V16L9.8,18V10.4L16.6,3.4z" fill="#fafafa" stroke="#3a3a3a" stroke-width="1" stroke-linejoin="round"/><path d="M9.8,10.4L16.6,3.4H9z" fill="#cfcfcf" opacity=".7"/><ellipse cx="8.9" cy="2.8" rx="8" ry="1.9" fill="#7cc0e4" stroke="#1f6d9b" stroke-width="1"/></svg>
<svg style="left:216px;top:230px" width="10" height="7" viewBox="0 0 10 7" ><path d="M1,5.6L5,1.6L9,5.6" fill="none" stroke="#4a4a4a" stroke-width="1.7"/></svg>
<svg style="left:216px;top:672px" width="10" height="7" viewBox="0 0 10 7" ><path d="M1,1.4L5,5.4L9,1.4" fill="none" stroke="#4a4a4a" stroke-width="1.7"/></svg>
<svg style="left:7px;top:690.5px" width="7" height="10" viewBox="0 0 7 10" ><path d="M5.6,1L1.6,5L5.6,9" fill="none" stroke="#4a4a4a" stroke-width="1.7"/></svg>
<svg style="left:200.5px;top:690.5px" width="7" height="10" viewBox="0 0 7 10" ><path d="M1.4,1L5.4,5L1.4,9" fill="none" stroke="#4a4a4a" stroke-width="1.7"/></svg>
<!-- tree icons -->
<svg style="left:27.6px;top:225.6px" width="19" height="19"><use href="#imp" width="19" height="19"/></svg>
<svg style="left:27.6px;top:247.6px" width="19" height="19"><use href="#imp" width="19" height="19"/></svg>
<svg style="left:27.6px;top:269.6px" width="19" height="19"><use href="#imp" width="19" height="19"/></svg>
<svg style="left:27.6px;top:291.6px" width="19" height="19"><use href="#imp" width="19" height="19"/></svg>
<svg style="left:27.6px;top:313.6px" width="19" height="19"><use href="#imp" width="19" height="19"/></svg>
<svg style="left:27.6px;top:335.6px" width="19" height="19"><use href="#imp" width="19" height="19"/></svg>
<svg style="left:28.5px;top:358px" width="18" height="18" viewBox="0 0 18 18" ><path d="M1,4.4L9.6,1L16.8,3.6V12.8L8.2,17.2L1,13.6z" fill="url(#gcube)" stroke="#4a4a4a" stroke-width="1" stroke-linejoin="round"/><path d="M1,4.4L7.6,7.2" stroke="#4a4a4a" stroke-width=".9"/><path d="M7.2,6.6L16.6,4.2V13L7.2,15.8z" fill="#7cc0e4" stroke="#1a5a86" stroke-width=".9"/><path d="M9.2,7.6L14.6,13M14.6,7.6L9.2,13" stroke="#111" stroke-width="1.9"/></svg>
<svg style="left:27.5px;top:380px" width="19" height="18" viewBox="0 0 19 18" ><path d="M14.2,1H1.2V11.6Q1.2,17 6.6,17H18.6" fill="none" stroke="#2a2a2a" stroke-width="1.1"/></svg>
<svg style="left:29px;top:402.5px" width="18" height="18"><use href="#csys" width="18" height="18"/></svg>
<svg style="left:29px;top:424.5px" width="18" height="18"><use href="#csys" width="18" height="18"/></svg>
<svg style="left:27.5px;top:445.5px" width="19" height="18" viewBox="0 0 19 18" ><path d="M8,2.4L13.6,0.8L17.8,2.8V15L13.2,17.4L8,15.4z" fill="#f4f4f4" stroke="#3a3a3a" stroke-width="1" stroke-linejoin="round"/><path d="M13.4,4.6V17.2M8,2.4L13.4,4.6L17.8,2.8" fill="none" stroke="#3a3a3a" stroke-width=".9"/><path d="M1,6.2L6,4.2L11,6V12.6L5.6,15.2L1,12.8z" fill="#4fa4d4" stroke="#154c70" stroke-width="1" stroke-linejoin="round"/><path d="M1,6.2L5.6,8.4L11,6M5.6,8.4V15.2" fill="none" stroke="#154c70" stroke-width=".9"/><path d="M1,6.2L6,4.2L11,6L5.6,8.4z" fill="#8ccbee"/></svg>
<svg style="left:11px;top:451px" width="5" height="8" viewBox="0 0 5 8" ><path d="M0.6,0.4V7.6L4.6,4z" fill="#5a5a5a"/></svg>
<svg style="left:28.8px;top:467.6px" width="17" height="19"><use href="#split" width="17" height="19"/></svg>
<svg style="left:11px;top:473px" width="5" height="8" viewBox="0 0 5 8" ><path d="M0.6,0.4V7.6L4.6,4z" fill="#5a5a5a"/></svg>
<svg style="left:28.8px;top:489.6px" width="17" height="19"><use href="#split" width="17" height="19"/></svg>
<svg style="left:11px;top:495px" width="5" height="8" viewBox="0 0 5 8" ><path d="M0.6,0.4V7.6L4.6,4z" fill="#5a5a5a"/></svg>
<svg style="left:27.8px;top:512.4px" width="19" height="19"><use href="#gcubex" width="19" height="19"/></svg>
<svg style="left:30px;top:533.5px" width="15" height="19" viewBox="0 0 15 19" ><path d="M1.2,4.4L13.2,1.4V14.6L1.2,17.6z" fill="url(#ggrey)" stroke="#b4b4b4" stroke-width=".9"/><path d="M7.2,0V19" stroke="#a4a4a4" stroke-width="1" stroke-dasharray="3 1.6"/></svg>
<svg style="left:27.8px;top:556.4px" width="19" height="19"><use href="#gcubex" width="19" height="19"/></svg>
<svg style="left:29px;top:577px" width="17" height="21" viewBox="0 0 17 21" ><path d="M5.6,2.6C5.6,0.6 11.4,0.6 11.4,2.6V9.6C11.4,12.6 15.6,14 15.8,16.2L8.6,20L1.2,16.2C1.6,14 5.6,12.6 5.6,9.6z" fill="url(#ggrey)" stroke="#bdbdbd" stroke-width=".8"/><ellipse cx="8.5" cy="2.6" rx="2.9" ry="1.3" fill="#ececec" stroke="#bdbdbd" stroke-width=".6"/></svg>
<svg style="left:11px;top:583px" width="5" height="8" viewBox="0 0 5 8" ><path d="M0.6,0.4V7.6L4.6,4z" fill="#5a5a5a"/></svg>
<svg style="left:27.6px;top:599.6px" width="20" height="20"><use href="#mirr" width="20" height="20"/></svg>
<svg style="left:27.6px;top:621.6px" width="20" height="20"><use href="#mirr" width="20" height="20"/></svg>
<svg style="left:30px;top:643.5px" width="15" height="19" viewBox="0 0 15 19" ><path d="M1.2,4.4L13.2,1.8V14.4L1.2,17.4z" fill="#fdfdfd" stroke="#1a1a1a" stroke-width="1.1"/><path d="M7.2,0V19" stroke="#1a1a1a" stroke-width="1.1" stroke-dasharray="3.4 1.8"/></svg>
<svg style="left:27.8px;top:666.4px" width="19" height="19"><use href="#gcubex" width="19" height="19"/></svg>
<!-- heads-up view toolbar -->
<svg width="0" height="0" style="left:0;top:0"><defs>
<radialGradient id="glens" cx=".4" cy=".35" r=".7"><stop offset="0" stop-color="#fff"/><stop offset="1" stop-color="#d4dde2"/></radialGradient>
<linearGradient id="gmet" x1="0" y1="0" x2="1" y2="1"><stop offset="0" stop-color="#fafafa"/><stop offset=".5" stop-color="#c8c8c8"/><stop offset="1" stop-color="#8e8e8e"/></linearGradient>
<linearGradient id="gblu" x1="0" y1="0" x2="1" y2="1"><stop offset="0" stop-color="#b8dcf0"/><stop offset="1" stop-color="#6fb2d8"/></linearGradient>
</defs></svg>
<svg style="left:493.5px;top:153.5px" width="19" height="19" viewBox="0 0 19 19" ><path d="M7.4,11.6L2,17.4" stroke="#3e86b4" stroke-width="2.8" stroke-linecap="round"/><path d="M7.4,11.6L2,17.4" stroke="#8cc4e4" stroke-width="1.2" stroke-linecap="round"/><circle cx="11.8" cy="6.8" r="5.9" fill="url(#glens)" stroke="#8a8a8a" stroke-width="1.1"/><path d="M11.8,2.6l1.3,1.6h-2.6zM11.8,11l1.3,-1.6h-2.6zM7.6,6.8l1.6,-1.3v2.6zM16,6.8l-1.6,-1.3v2.6z" fill="#2a2a2a"/></svg>
<svg style="left:519px;top:153.5px" width="20" height="19" viewBox="0 0 20 19" ><rect x="6.6" y="1" width="12" height="11.6" fill="none" stroke="#2a2a2a" stroke-width="1" stroke-dasharray="2.4 1.6"/><path d="M6.6,12.4L1.8,17.4" stroke="#3e86b4" stroke-width="2.8" stroke-linecap="round"/><path d="M6.6,12.4L1.8,17.4" stroke="#8cc4e4" stroke-width="1.2" stroke-linecap="round"/><circle cx="10.6" cy="7.8" r="5.7" fill="url(#glens)" stroke="#8a8a8a" stroke-width="1.1"/></svg>
<svg style="left:546px;top:153.5px" width="19" height="19" viewBox="0 0 19 19" ><g transform="translate(3,-2) rotate(-40 8 11) scale(.92)"><path d="M-1.6,6.6L4.4,7.6L7,9L14.6,9.2V13L7,13.2L4.4,14.6L-1.6,15.6z" fill="url(#gmet)" stroke="#6e6e6e" stroke-width=".8" stroke-linejoin="round"/><path d="M4.4,7.6V14.6M7,9V13.2M11,9.1V13.1" stroke="#8a8a8a" stroke-width=".6"/><rect x="14.6" y="9.6" width="2.6" height="3" fill="#e4e4e4" stroke="#6e6e6e" stroke-width=".7"/><ellipse cx="-1.4" cy="11.1" rx="1.9" ry="4.4" fill="#f2f2f2" stroke="#6e6e6e" stroke-width=".8"/><ellipse cx="-1.4" cy="11.1" rx="1" ry="2.6" fill="#c4c4c4"/></g><path d="M18.4,13.2H12.4V11L8.4,14.2L12.4,17.4V15.2H18.4z" fill="#2c84ba"/></svg>
<svg style="left:571.5px;top:153.5px" width="20" height="19" viewBox="0 0 20 19" ><path d="M1.2,6.2C1.2,3 6,1.4 10,1.4S18.8,3 18.8,6.2V14C18.8,16 17,17 15.4,17.4V10.4C15.4,8.4 13,7.4 10,7.4S4.6,8.4 4.6,10.4V17.4C3,17 1.2,16 1.2,14z" fill="#e0e0e0" stroke="#6a6a6a" stroke-width=".9"/><path d="M6.6,8.4C8,7.2 12,7.2 13.4,8.4V15.4H6.6z" fill="url(#gmet)" stroke="#8a8a8a" stroke-width=".6"/><path d="M1.6,7.6L6.4,9.6V18L1.6,15.6z" fill="#5aa4cf" stroke="#1a5a86" stroke-width=".8"/><path d="M13.6,9.6L18.4,7.6V15.6L13.6,18z" fill="#5aa4cf" stroke="#1a5a86" stroke-width=".8"/><path d="M2.2,11.4L5.8,9.8M2.2,13.6L5.8,12M2.2,15.6L5.8,14.2M14.2,12L17.8,10.2M14.2,14.2L17.8,12.4M14.2,16.4L17.8,14.6" stroke="#cfe8f6" stroke-width=".8"/></svg>
<svg style="left:597.5px;top:153.5px" width="19" height="19" viewBox="0 0 19 19" ><g transform="translate(3,-2) rotate(-40 8 11) scale(.92)"><path d="M-1.6,6.6L4.4,7.6L7,9L14.6,9.2V13L7,13.2L4.4,14.6L-1.6,15.6z" fill="url(#gmet)" stroke="#6e6e6e" stroke-width=".8" stroke-linejoin="round"/><path d="M4.4,7.6V14.6M7,9V13.2M11,9.1V13.1" stroke="#8a8a8a" stroke-width=".6"/><rect x="14.6" y="9.6" width="2.6" height="3" fill="#e4e4e4" stroke="#6e6e6e" stroke-width=".7"/><ellipse cx="-1.4" cy="11.1" rx="1.9" ry="4.4" fill="#f2f2f2" stroke="#6e6e6e" stroke-width=".8"/><ellipse cx="-1.4" cy="11.1" rx="1" ry="2.6" fill="#c4c4c4"/></g><path d="M4.4,0.6L10.4,0.2L7.2,3.8L10.2,3.6L2.4,9.8L4.8,5.8L1.8,6.2z" fill="#f4a81c" stroke="#c4640c" stroke-width=".6" stroke-linejoin="round"/></svg>
<span class="t" style="left:606.5px;top:158px;font-family:'Liberation Serif',serif;font-size:14px;font-weight:700;line-height:16px;color:#3e86b4;">A</span>
<svg style="left:623.5px;top:153.5px" width="19" height="19" viewBox="0 0 19 19" ><path d="M1,5.8L6,1.2H18V13.4L13,18" fill="#f6f6f6" stroke="#3a3a3a" stroke-width="1"/><path d="M13,5.8L18,1.2M6,1.2V5.6" stroke="#3a3a3a" stroke-width=".9"/><rect x="1" y="5.8" width="12" height="12.2" fill="url(#gblu)" stroke="#1a5a86" stroke-width="1"/><path d="M10,1.4V5M8.6,3.6L10,5.2L11.4,3.6M17.6,10H14M15.6,8.6L14,10L15.6,11.4" stroke="#2a2a2a" stroke-width=".9" fill="none"/></svg>
<svg style="left:648.9px;top:161.9px" width="7" height="4" viewBox="0 0 7 4"><path d="M0.3,0.2h6.4L3.5,3.6z" fill="#9a9a9a"/></svg>
<svg style="left:664.5px;top:153px" width="19" height="20" viewBox="0 0 19 20" ><path d="M1,4.2L8,1.2L17.6,3V15.2L8.4,18.8L1,15z" fill="#f4f4f4" stroke="#6a6a6a" stroke-width=".9" stroke-linejoin="round"/><path d="M1,4.2L8.4,6.8V18.8L1,15z" fill="#5aa4cf" stroke="#1a5a86" stroke-width=".8"/><path d="M8.4,6.8L17.6,3V15.2L8.4,18.8z" fill="url(#gcube)" stroke="#6a6a6a" stroke-width=".8"/><path d="M8.4,6.8L12.4,5.2V17.2L8.4,18.8z" fill="#a6d2ec"/><path d="M1,4.2L8,1.2L17.6,3L8.4,6.8z" fill="#cfe6f4" stroke="#6a6a6a" stroke-width=".7"/></svg>
<svg style="left:688.8px;top:161.9px" width="7" height="4" viewBox="0 0 7 4"><path d="M0.3,0.2h6.4L3.5,3.6z" fill="#9a9a9a"/></svg>
<svg style="left:703.5px;top:155px" width="20" height="17" viewBox="0 0 20 17" ><path d="M1,8.4C4,3.2 16,3.2 19,8.4C16,13.6 4,13.6 1,8.4z" fill="#f4f4f4" stroke="#a6a6a6" stroke-width="1.1"/><circle cx="10" cy="8.2" r="3.8" fill="#a4a4a4"/><path d="M10,4.4A3.8,3.8 0 0 0 10,12z" fill="#6e6e6e"/><path d="M10,0.8V16" stroke="#6a6a6a" stroke-width="1"/></svg>
<svg style="left:728.9px;top:161.9px" width="7" height="4" viewBox="0 0 7 4"><path d="M0.3,0.2h6.4L3.5,3.6z" fill="#9a9a9a"/></svg>
<svg style="left:743px;top:152.5px" width="21" height="21" viewBox="0 0 21 21" ><g transform="translate(0.6,0.4)"><clipPath id="cb743152"><circle cx="7.5" cy="7.5" r="7.1"/></clipPath><g clip-path="url(#cb743152)"><rect x="0" y="0" width="7.5" height="8.5" fill="#3a7ad8"/><rect x="6.5" y="0" width="8.5" height="8.5" fill="#dc3a2c"/><rect x="0" y="8.5" width="6.5" height="7.5" fill="#3aac3e"/><rect x="6.5" y="8.5" width="9.5" height="7.5" fill="#f0c414"/><path d="M6.1,0 Q4.5,7.5 6.5,15" stroke="#f4f4f4" stroke-width=".7" opacity=".7" fill="none"/><path d="M0,8.5 Q7.5,9.9 15,7.1" stroke="#f4f4f4" stroke-width="1" fill="none"/><circle cx="7.5" cy="7.5" r="7.5" fill="url(#gball)"/></g></g><g transform="translate(13.2,13.4) rotate(-45)"><rect x="-5.4" y="-2" width="10.4" height="4" fill="#f2c230" stroke="#5a4a1a" stroke-width=".8"/><path d="M-5.4,-2L-9,0L-5.4,2z" fill="#f0d8a8" stroke="#5a4a1a" stroke-width=".7"/><rect x="5" y="-2" width="2.4" height="4" fill="#e0786c" stroke="#5a4a1a" stroke-width=".7"/></g></svg>
<svg style="left:768.5px;top:152.5px" width="19" height="21" viewBox="0 0 19 21" ><rect x=".6" y="12.6" width="16.8" height="6.8" fill="#f4f4f4" stroke="#2a2a2a" stroke-width=".8"/><rect x="1.0" y="13" width="3.2" height="3" fill="#2a2a2a"/><rect x="1.0" y="16" width="3.2" height="3" fill="#f4f4f4"/><rect x="4.2" y="13" width="3.2" height="3" fill="#f4f4f4"/><rect x="4.2" y="16" width="3.2" height="3" fill="#2a2a2a"/><rect x="7.4" y="13" width="3.2" height="3" fill="#2a2a2a"/><rect x="7.4" y="16" width="3.2" height="3" fill="#f4f4f4"/><rect x="10.6" y="13" width="3.2" height="3" fill="#f4f4f4"/><rect x="10.6" y="16" width="3.2" height="3" fill="#2a2a2a"/><rect x="13.8" y="13" width="3.2" height="3" fill="#2a2a2a"/><rect x="13.8" y="16" width="3.2" height="3" fill="#f4f4f4"/><g transform="translate(1.6,0.4)"><clipPath id="cb768152"><circle cx="7.3" cy="7.3" r="6.8999999999999995"/></clipPath><g clip-path="url(#cb768152)"><rect x="0" y="0" width="7.3" height="8.3" fill="#3a7ad8"/><rect x="6.3" y="0" width="8.3" height="8.3" fill="#dc3a2c"/><rect x="0" y="8.3" width="6.3" height="7.3" fill="#3aac3e"/><rect x="6.3" y="8.3" width="9.3" height="7.3" fill="#f0c414"/><path d="M5.9,0 Q4.3,7.3 6.3,14.6" stroke="#f4f4f4" stroke-width=".7" opacity=".7" fill="none"/><path d="M0,8.3 Q7.3,9.7 14.6,6.8999999999999995" stroke="#f4f4f4" stroke-width="1" fill="none"/><circle cx="7.3" cy="7.3" r="7.3" fill="url(#gball)"/></g></g></svg>
<svg style="left:794.7px;top:161.9px" width="7" height="4" viewBox="0 0 7 4"><path d="M0.3,0.2h6.4L3.5,3.6z" fill="#9a9a9a"/></svg>
<svg style="left:809.5px;top:154.5px" width="19" height="17" viewBox="0 0 19 17" ><rect x=".8" y=".8" width="17.2" height="11" fill="#e4e4e4" stroke="#5a5a5a" stroke-width="1.2"/><rect x="2" y="2" width="14.8" height="5" fill="#f2f2f2"/><path d="M9.4,12V15M5.4,15.6H13.4" stroke="#4a4a4a" stroke-width="1.6"/></svg>
<svg style="left:834.7px;top:161.9px" width="7" height="4" viewBox="0 0 7 4"><path d="M0.3,0.2h6.4L3.5,3.6z" fill="#9a9a9a"/></svg>
<!-- MDI controls -->
<svg style="left:979.5px;top:134px" width="13" height="14" viewBox="0 0 13 14" ><rect x=".6" y=".6" width="11.6" height="12.6" fill="none" stroke="#8a8a8a" stroke-width="1.1"/><path d="M2.4,6.9L5.6,4.2V9.6z" fill="#8a8a8a"/><path d="M5.6,4V10" stroke="#8a8a8a" stroke-width=".8"/></svg>
<svg style="left:1005.5px;top:134px" width="13" height="14" viewBox="0 0 13 14" ><rect x=".6" y=".6" width="11.6" height="12.6" fill="none" stroke="#8a8a8a" stroke-width="1.1"/><path d="M10.2,6.9L7,4.2V9.6z" fill="#8a8a8a"/><path d="M7,4V10" stroke="#8a8a8a" stroke-width=".8"/></svg>
<div style="left:1033px;top:144px;width:10px;height:3px;background:#9a9a9a;"></div>
<svg style="left:1057px;top:135px" width="14" height="11" viewBox="0 0 14 11" ><path d="M3.6,3V.8H12.8V7.4H10" fill="none" stroke="#8a8a8a" stroke-width="1.2"/><rect x=".7" y="3.4" width="9" height="6.6" fill="none" stroke="#8a8a8a" stroke-width="1.2"/></svg>
<svg style="left:1084.5px;top:136px" width="11" height="11" viewBox="0 0 11 11" ><path d="M.8,.8L10.2,10.2M10.2,.8L.8,10.2" stroke="#8a8a8a" stroke-width="1.2"/></svg>
<!-- task pane icons -->
<svg style="left:1088px;top:179.5px" width="19" height="19" viewBox="0 0 19 19" ><path d="M3.5,9.5V17.6h12V9.5" fill="#fff" stroke="#3a3a3a" stroke-width="1.3"/><path d="M7.6,17.4v-5.8h3.8v5.8" fill="none" stroke="#3a3a3a" stroke-width="1.2"/><path d="M9.6,13.6v2" stroke="#3a3a3a" stroke-width="1"/><path d="M1,10.2L9.5,1.8L18,10.2" fill="none" stroke="#1d5f8d" stroke-width="2.3"/></svg>
<svg style="left:1089.5px;top:203px" width="15" height="19" viewBox="0 0 15 19" ><g fill="#f4f4f4" stroke="#3a3a3a" stroke-width="1" stroke-linejoin="round"><path d="M1,6.2L4.4,2.4V15.2L1,17.8z" fill="#dcdcdc"/><path d="M4.4,2.4L6.2,1.2L7.6,2.8V16.6L4.4,15.2z"/><path d="M7.6,2.8L9.4,1.6L10.8,3.2V17.2L7.6,16.6z"/><path d="M10.8,3.2L12.6,2L14,3.6V17.8L10.8,17.2z"/></g></svg>
<svg style="left:1086.5px;top:228px" width="21" height="19" viewBox="0 0 21 19" ><path d="M1,17.4V1.8H7L8.6,4H17V8" fill="#e8e8e8" stroke="#3a3a3a" stroke-width="1.1" stroke-linejoin="round"/><path d="M1,17.6L5.2,8H20.2L16.2,17.6z" fill="#f6f6f6" stroke="#3a3a3a" stroke-width="1.1" stroke-linejoin="round"/></svg>
<svg style="left:1088px;top:253px" width="19" height="17" viewBox="0 0 19 17" ><rect x=".7" y=".7" width="17.4" height="15" rx="1.6" fill="#f4f4f4" stroke="#3a3a3a" stroke-width="1.1"/><g fill="#f2c21c" stroke="#8a6a08" stroke-width=".7"><rect x="3" y="3" width="8.4" height="2.8"/><rect x="5.6" y="7.2" width="3.2" height="3.6"/><rect x="3" y="10.6" width="8.4" height="2.8"/><rect x="13.2" y="3" width="2.6" height="2.8"/></g><rect x="13.2" y="8" width="2.8" height="6" fill="#bdbdbd" stroke="#5a5a5a" stroke-width=".6"/></svg>
<svg style="left:1088.8px;top:276px" width="17" height="17" viewBox="0 0 17 17" ><clipPath id="cb1088276"><circle cx="8.2" cy="8.2" r="7.799999999999999"/></clipPath><g clip-path="url(#cb1088276)"><rect x="0" y="0" width="8.2" height="9.2" fill="#3a7ad8"/><rect x="7.199999999999999" y="0" width="9.2" height="9.2" fill="#dc3a2c"/><rect x="0" y="9.2" width="7.199999999999999" height="8.2" fill="#3aac3e"/><rect x="7.199999999999999" y="9.2" width="10.2" height="8.2" fill="#f0c414"/><path d="M6.799999999999999,0 Q5.199999999999999,8.2 7.199999999999999,16.4" stroke="#f4f4f4" stroke-width=".7" opacity=".7" fill="none"/><path d="M0,9.2 Q8.2,10.6 16.4,7.799999999999999" stroke="#f4f4f4" stroke-width="1" fill="none"/><circle cx="8.2" cy="8.2" r="8.2" fill="url(#gball)"/></g></svg>
<svg style="left:1088px;top:300px" width="19" height="19" viewBox="0 0 19 19" ><rect x=".8" y=".8" width="17.2" height="17" rx="1" fill="#f6f6f6" stroke="#3a3a3a" stroke-width="1.1"/><path d="M1.2,1.2H17.6V3.8H1.2z" fill="#5aa6d2" stroke="#1a5a86" stroke-width=".6"/><g fill="#2c84ba" stroke="#1a5a86" stroke-width=".5"><rect x="3" y="6" width="4" height="2.2"/><rect x="3" y="10" width="4" height="2.2"/><rect x="3" y="14" width="4" height="2.2"/></g><path d="M8.8,7.1h7M8.8,11.1h7M8.8,15.1h7" stroke="#3a3a3a" stroke-width="1"/></svg>
<!-- triad -->
<svg style="left:262px;top:605px" width="46" height="52" viewBox="0 0 46 52" ><path d="M9.1,46V22" stroke="#1c6a1c" stroke-width="3.2"/><path d="M9.1,46V22" stroke="#4a9a4a" stroke-width="1"/><path d="M9.1,15L5.2,23.8H13z" fill="#1c6a1c"/><path d="M9,45.1H31" stroke="#2020c8" stroke-width="3.4"/><path d="M9,45.1H31" stroke="#7a7af0" stroke-width="1"/><path d="M38.8,45.1L30.4,41.4V48.8z" fill="#2020c8"/><path d="M6.4,43V48M10,46.6V48.6" stroke="#f02020" stroke-width="1"/></svg>
<!-- bottom tab nav buttons -->
<svg style="left:3px;top:709px" width="16" height="14" viewBox="0 0 16 14" ><rect x=".5" y="-.5" width="15" height="14" fill="#c4c4c4" stroke="#a8a8a8"/><path d="M4,3V11" stroke="#a4a4a4" stroke-width="1.4"/><path d="M12,3V11L5.4,7.5z" fill="#a4a4a4"/></svg>
<svg style="left:19px;top:709px" width="16" height="14" viewBox="0 0 16 14" ><rect x=".5" y="-.5" width="15" height="14" fill="#c4c4c4" stroke="#a8a8a8"/><path d="M11,3V11L4.4,7.5z" fill="#a4a4a4"/></svg>
<svg style="left:35px;top:709px" width="16" height="14" viewBox="0 0 16 14" ><rect x=".5" y="-.5" width="15" height="14" fill="#c4c4c4" stroke="#a8a8a8"/><path d="M5,3V11L11.6,7.5z" fill="#a4a4a4"/></svg>
<svg style="left:51px;top:709px" width="16" height="14" viewBox="0 0 16 14" ><rect x=".5" y="-.5" width="15" height="14" fill="#c4c4c4" stroke="#a8a8a8"/><path d="M12,3V11" stroke="#a4a4a4" stroke-width="1.4"/><path d="M4,3V11L10.6,7.5z" fill="#a4a4a4"/></svg>
<!-- selection filter toolbar -->
<div style="left:5px;top:729px;width:2px;height:2px;border-radius:1px;background:#8a8a8a;"></div>
<div style="left:5px;top:733px;width:2px;height:2px;border-radius:1px;background:#8a8a8a;"></div>
<div style="left:5px;top:737px;width:2px;height:2px;border-radius:1px;background:#8a8a8a;"></div>
<div style="left:5px;top:741px;width:2px;height:2px;border-radius:1px;background:#8a8a8a;"></div>
<div style="left:5px;top:745px;width:2px;height:2px;border-radius:1px;background:#8a8a8a;"></div>
<div style="left:5px;top:749px;width:2px;height:2px;border-radius:1px;background:#8a8a8a;"></div>
<div style="left:5px;top:753px;width:2px;height:2px;border-radius:1px;background:#8a8a8a;"></div>
<svg style="left:20px;top:732px" width="16" height="17" viewBox="0 0 16 17" ><path d="M1.6,2.2H13.799999999999999V4.216L9.652,8.248000000000001V14.8H5.747999999999999V8.248000000000001L1.6,4.216z" fill="#ececec" stroke="#c2c2c2" stroke-width="1" stroke-linejoin="round"/></svg>
<svg style="left:44px;top:730px" width="22" height="21" viewBox="0 0 22 21" ><path d="M1.6,1.6H12.0V3.04L8.464,5.92V10.6H5.136000000000001V5.92L1.6,3.04z" fill="#ececec" stroke="#c2c2c2" stroke-width="1" stroke-linejoin="round"/><path d="M5.2,5H15.600000000000001V6.4399999999999995L12.064,9.32V14H8.736V9.32L5.2,6.4399999999999995z" fill="#ececec" stroke="#c2c2c2" stroke-width="1" stroke-linejoin="round"/><path d="M8.8,8.4H19.200000000000003V10.096L15.664000000000001,13.488V19.0H12.336000000000002V13.488L8.8,10.096z" fill="#ececec" stroke="#c2c2c2" stroke-width="1" stroke-linejoin="round"/></svg>
<svg style="left:72px;top:730.5px" width="21" height="21" viewBox="0 0 21 21" ><path d="M1,1H11.6V2.6L7.784,5.0V9H4.816V5.0L1,2.6z" fill="#b43cd6" stroke="#5a0a7a" stroke-width=".9" stroke-linejoin="round"/><path d="M4.6,5H15.2V6.6L11.384,9.0V13H8.416V9.0L4.6,6.6z" fill="#b43cd6" stroke="#5a0a7a" stroke-width=".9" stroke-linejoin="round"/><path d="M8.2,9H18.799999999999997V10.6L14.983999999999998,14.0V19H12.015999999999998V14.0L8.2,10.6z" fill="#b43cd6" stroke="#5a0a7a" stroke-width=".9" stroke-linejoin="round"/></svg>
<div style="left:96px;top:728px;width:42px;height:26px;background:#f8f8f8;border:1px solid #a8a8a8;"></div>
<div style="left:96px;top:728px;width:29px;height:26px;background:#bebebe;border:1px solid #7c7c7c;"></div>
<svg style="left:103.5px;top:731px" width="14" height="20" viewBox="0 0 14 20" ><path d="M1.4,1.2V15.6L4.9,12.3L7.6,18.2L10,17.1L7.4,11.4H12.4z" fill="#fff" stroke="#1a1a1a" stroke-width="1.1" stroke-linejoin="round"/></svg>
<svg style="left:127px;top:739px" width="7" height="4" viewBox="0 0 7 4" ><path d="M0.3,0.2h6.4L3.5,3.6z" fill="#222"/></svg>
<svg style="left:142px;top:731px" width="19" height="20" viewBox="0 0 19 20" ><path d="M1.4,1.2V15.6L4.9,12.3L7.6,18.2L10,17.1L7.4,11.4H12.4z" fill="#f0f0f0" stroke="#bcbcbc" stroke-width="1.1" stroke-linejoin="round"/><path d="M7.4,6H17.6L14,10V17L11.4,15.4V10z" fill="#dcdcdc" stroke="#bcbcbc" stroke-width=".8" opacity=".9"/></svg>
<div style="left:167px;top:730px;width:1px;height:22px;background:#8a8a8a;"></div>
<svg style="left:178px;top:729px" width="22" height="24" viewBox="0 0 22 24" ><circle cx="5.5" cy="8.4" r="2.6" fill="#5aa4cf" stroke="#1f6d9b" stroke-width="1"/><path d="M10.6,14.6H17.4L14.9,17.6V21.2H13.1V17.6z" fill="#a62cc8" stroke="#7a1a9a" stroke-width=".5"/></svg>
<svg style="left:204px;top:729px" width="22" height="24" viewBox="0 0 22 24" ><path d="M5.7,2.6V20.8" stroke="#1f6d9b" stroke-width="1.8"/><path d="M11.299999999999988,14.6H18.099999999999987L15.599999999999989,17.6V21.2H13.799999999999988V17.6z" fill="#a62cc8" stroke="#7a1a9a" stroke-width=".5"/></svg>
<svg style="left:230px;top:729px" width="22" height="24" viewBox="0 0 22 24" ><rect x="1.6" y="3.2" width="13" height="13" fill="#5aa4cf" stroke="#1f6d9b" stroke-width="1"/><path d="M12.299999999999988,14.6H19.099999999999987L16.599999999999987,17.6V21.2H14.799999999999988V17.6z" fill="#a62cc8" stroke="#7a1a9a" stroke-width=".5"/></svg>
<svg style="left:257px;top:729px" width="22" height="24" viewBox="0 0 22 24" ><path d="M1.4,10C3,5 8,3.4 10.6,6.4C12.6,4 16,3 18.6,4.4V13.4C16,12.4 13,13.6 11,16.4C8.4,19.8 4,15.6 1.4,10z" fill="#5aa4cf" stroke="#1f6d9b" stroke-width="1"/><path d="M10.6,6.4C12,8.4 12,13 11,16.4" fill="none" stroke="#1f6d9b" stroke-width=".8"/><path d="M12.799999999999988,14.6H19.599999999999987L17.099999999999987,17.6V21.2H15.299999999999988V17.6z" fill="#a62cc8" stroke="#7a1a9a" stroke-width=".5"/></svg>
<svg style="left:284px;top:729px" width="22" height="24" viewBox="0 0 22 24" ><path d="M1.4,6L7.6,2.8L16.8,4.8V15.4L10,20L1.4,16.4z" fill="#5aa4cf" stroke="#1f6d9b" stroke-width="1" stroke-linejoin="round"/><path d="M1.4,6L10,8.8L16.8,4.8M10,8.8V20" fill="none" stroke="#1f6d9b" stroke-width=".9"/><path d="M1.4,6L7.6,2.8L16.8,4.8L10,8.8z" fill="#9cd0ee"/><path d="M12.799999999999988,14.6H19.599999999999987L17.099999999999987,17.6V21.2H15.299999999999988V17.6z" fill="#a62cc8" stroke="#7a1a9a" stroke-width=".5"/></svg>
<svg style="left:310px;top:729px" width="22" height="24" viewBox="0 0 22 24" ><path d="M2,19L18,3.4" stroke="#1f6d9b" stroke-width="1.7" stroke-dasharray="5 1.6 1.6 1.6"/><path d="M14.1,14.6H20.9L18.4,17.6V21.2H16.6V17.6z" fill="#a62cc8" stroke="#7a1a9a" stroke-width=".5"/></svg>
<svg style="left:337px;top:729px" width="22" height="24" viewBox="0 0 22 24" ><path d="M2,5.6L12.6,2.6V17L2,20z" fill="#9cd0ee" stroke="#1f6d9b" stroke-width="1"/><path d="M7.4,1V22" stroke="#2a2a2a" stroke-width="1" stroke-dasharray="3 1.4"/><path d="M13.999999999999977,14.6H20.799999999999976L18.299999999999976,17.6V21.2H16.49999999999998V17.6z" fill="#a62cc8" stroke="#7a1a9a" stroke-width=".5"/></svg>
<svg style="left:366px;top:729px" width="22" height="24" viewBox="0 0 22 24" ><rect x="3" y="6.2" width="5.4" height="5.4" fill="#5aa4cf" stroke="#1f6d9b" stroke-width="1"/><path d="M11.499999999999977,14.6H18.299999999999976L15.799999999999978,17.6V21.2H13.999999999999977V17.6z" fill="#a62cc8" stroke="#7a1a9a" stroke-width=".5"/></svg>
<svg style="left:392px;top:729px" width="22" height="24" viewBox="0 0 22 24" ><path d="M5,4v15M9,4v15M13,4v15M2,8h16M2,12h16M2,16h16" stroke="#e2e2e2" stroke-width=".8"/><path d="M14.4,3.2H2.2V13Q2.2,18.6 7.8,18.6H16" fill="none" stroke="#1f6d9b" stroke-width="1.7"/><path d="M12.700000000000022,14.6H19.50000000000002L17.00000000000002,17.6V21.2H15.200000000000022V17.6z" fill="#a62cc8" stroke="#7a1a9a" stroke-width=".5"/></svg>
<svg style="left:418px;top:729px" width="22" height="24" viewBox="0 0 22 24" ><path d="M3.6,4.6H17.4" stroke="#1f6d9b" stroke-width="1.6"/><path d="M3.6,4.6V19.4" stroke="#1a1a1a" stroke-width="1.4"/><rect x="2.1" y="3.0999999999999996" width="3" height="3" fill="#fff" stroke="#1a1a1a" stroke-width=".9"/><rect x="16.1" y="3.0999999999999996" width="3" height="3" fill="#fff" stroke="#1a1a1a" stroke-width=".9"/><rect x="2.1" y="18.1" width="3" height="3" fill="#fff" stroke="#1a1a1a" stroke-width=".9"/><path d="M13.6,14.6H20.4L17.9,17.6V21.2H16.1V17.6z" fill="#a62cc8" stroke="#7a1a9a" stroke-width=".5"/></svg>
<svg style="left:446px;top:729px" width="22" height="24" viewBox="0 0 22 24" ><path d="M2.4,19L17,3.6" stroke="#1f6d9b" stroke-width="1.7"/><rect x="8.3" y="9.7" width="3" height="3" fill="#fff" stroke="#1a1a1a" stroke-width=".9"/><path d="M12.6,14.6H19.4L16.9,17.6V21.2H15.1V17.6z" fill="#a62cc8" stroke="#7a1a9a" stroke-width=".5"/></svg>
<svg style="left:473px;top:729px" width="22" height="24" viewBox="0 0 22 24" ><circle cx="10" cy="12" r="5.6" fill="none" stroke="#2a2a2a" stroke-width="1.6"/><circle cx="10" cy="12" r="2" fill="#1f6d9b"/><path d="M10,3V8M10,16V21M1,12H6M14,12H19" stroke="#1f6d9b" stroke-width="1.5"/><path d="M12.299999999999988,14.6H19.099999999999987L16.599999999999987,17.6V21.2H14.799999999999988V17.6z" fill="#a62cc8" stroke="#7a1a9a" stroke-width=".5"/></svg>
<svg style="left:500px;top:729px" width="22" height="24" viewBox="0 0 22 24" ><path d="M2.6,3.4H8.4V9H17.4V15H8.4V20.4H2.6z" fill="#eeeeee" stroke="#7a7a7a" stroke-width="1"/><path d="M0.6,12H19" stroke="#1f6d9b" stroke-width="1.1" stroke-dasharray="2.4 1.2"/><path d="M12.300000000000045,14.6H19.100000000000044L16.600000000000044,17.6V21.2H14.800000000000045V17.6z" fill="#a62cc8" stroke="#7a1a9a" stroke-width=".5"/></svg>
<svg style="left:527px;top:729px" width="22" height="24" viewBox="0 0 22 24" ><g transform="rotate(40 9 9)"><rect x="2" y="5.4" width="13" height="7.6" fill="none" stroke="#1a1a1a" stroke-width="1.5"/><path d="M4.6,5.4V8M7.2,5.4V8M9.8,5.4V8M12.4,5.4V8" stroke="#1a1a1a" stroke-width="1"/></g><path d="M5,14.6L9,17.4" stroke="#1f6d9b" stroke-width="1.6"/><path d="M12.6,14.6H19.4L16.9,17.6V21.2H15.1V17.6z" fill="#a62cc8" stroke="#7a1a9a" stroke-width=".5"/></svg>
<svg style="left:554px;top:729px" width="22" height="24" viewBox="0 0 22 24" ><path d="M2,9.4L8.4,20.4L13,3.6H19" fill="none" stroke="#2a2a2a" stroke-width="1.6" stroke-linejoin="miter"/><path d="M12.800000000000045,14.6H19.600000000000044L17.100000000000044,17.6V21.2H15.300000000000045V17.6z" fill="#a62cc8" stroke="#7a1a9a" stroke-width=".5"/></svg>
<svg style="left:580.5px;top:729px" width="22" height="24" viewBox="0 0 22 24" ><rect x="1.4" y="3.8" width="19" height="8.6" fill="#f8f8f8" stroke="#2a2a2a" stroke-width="1.1"/><path d="M9.6,3.8V12.4" stroke="#2a2a2a" stroke-width="1"/><path d="M3.6,9.6C3.6,6 7.6,6 7.6,9.6z" fill="none" stroke="#2a2a2a" stroke-width=".9"/><path d="M12,6V10.4H13.6V6zM15.2,10.4h.6M17,6H19V8H17.6H19V10.4H17" fill="none" stroke="#2a2a2a" stroke-width=".8"/><path d="M13.6,14.6H20.4L17.9,17.6V21.2H16.1V17.6z" fill="#a62cc8" stroke="#7a1a9a" stroke-width=".5"/></svg>
<svg style="left:608px;top:729px" width="22" height="24" viewBox="0 0 22 24" ><path d="M7,13L1.6,19.6" stroke="#2a2a2a" stroke-width="1.8"/><circle cx="11.4" cy="8.4" r="6" fill="#fafafa" stroke="#4a4a4a" stroke-width="1.1"/><path d="M9.2,11.2V5.6L13.6,11.2V5.6" fill="none" stroke="#2a2a2a" stroke-width="1.1"/><path d="M12.499999999999977,14.6H19.299999999999976L16.799999999999976,17.6V21.2H14.999999999999977V17.6z" fill="#a62cc8" stroke="#7a1a9a" stroke-width=".5"/></svg>
<svg style="left:636px;top:729px" width="22" height="24" viewBox="0 0 22 24" ><rect x="1.4" y="2.6" width="13" height="13.4" fill="#fafafa" stroke="#2a2a2a" stroke-width="1.1"/><path d="M4,13.6L7.9,4.6L11.8,13.6M5.4,10.6H10.4" fill="none" stroke="#1a1a1a" stroke-width="1.5"/><path d="M7.9,16V18M4.4,21.6L7.9,17.6L11.4,21.6z" fill="#1a1a1a" stroke="#1a1a1a" stroke-width=".8"/><path d="M11.499999999999977,14.6H18.299999999999976L15.799999999999978,17.6V21.2H13.999999999999977V17.6z" fill="#a62cc8" stroke="#7a1a9a" stroke-width=".5"/></svg>
<svg style="left:662px;top:729px" width="22" height="24" viewBox="0 0 22 24" ><path d="M1.6,16L5.4,8H12L15,13.4L18.6,4.4M10,8L18.6,4.4M5.4,8L3,8" fill="none" stroke="#2a2a2a" stroke-width="1.5"/><path d="M12.700000000000022,14.6H19.50000000000002L17.00000000000002,17.6V21.2H15.200000000000022V17.6z" fill="#a62cc8" stroke="#7a1a9a" stroke-width=".5"/></svg>
<svg style="left:688px;top:729px" width="22" height="24" viewBox="0 0 22 24" ><path d="M2.4,3V10.4H10.4" fill="none" stroke="#1f6d9b" stroke-width="1.4"/><path d="M2.4,5L8,10.4" stroke="#1f6d9b" stroke-width="1.1"/><path d="M2.4,13C4.4,15.4 4.4,18 2.4,20.4M5.4,13C7.4,15.4 7.4,18 5.4,20.4M8.4,13C10.4,15.4 10.4,18 8.4,20.4M11.4,13C13.4,15.4 13.4,18 11.4,20.4" fill="none" stroke="#3a3a3a" stroke-width="1"/><path d="M13.700000000000022,14.6H20.50000000000002L18.00000000000002,17.6V21.2H16.200000000000024V17.6z" fill="#a62cc8" stroke="#7a1a9a" stroke-width=".5"/></svg>
<svg style="left:716px;top:729px" width="22" height="24" viewBox="0 0 22 24" ><path d="M6.4,14L1.4,19.8" stroke="#2a2a2a" stroke-width="1.8"/><circle cx="11.6" cy="9.4" r="6.4" fill="#fafafa" stroke="#5a5a5a" stroke-width="1.1"/><path d="M5.2,9.4H18" stroke="#5a5a5a" stroke-width=".9"/><path d="M8.2,14L10.2,10.2L12.2,14M13.4,11.2L14.6,10.4V14" fill="none" stroke="#2a2a2a" stroke-width="1"/><path d="M12.6,14.6H19.4L16.9,17.6V21.2H15.1V17.6z" fill="#a62cc8" stroke="#7a1a9a" stroke-width=".5"/></svg>
<svg style="left:742.5px;top:729px" width="22" height="24" viewBox="0 0 22 24" ><path d="M2,3H14.4V13.4L8.2,19.6L2,13.4z" fill="#ececec" stroke="#2a2a2a" stroke-width="1" stroke-dasharray="1.6 1.2"/><path d="M4.6,3.6V13.4L8.2,17L11.8,13.4V3.6" fill="#d8d8d8" stroke="#7a7a7a" stroke-width=".8"/><path d="M13.399999999999954,14.6H20.199999999999953L17.699999999999953,17.6V21.2H15.899999999999954V17.6z" fill="#a62cc8" stroke="#7a1a9a" stroke-width=".5"/></svg>
<svg style="left:770.5px;top:729px" width="22" height="24" viewBox="0 0 22 24" ><rect x="1.2" y="3" width="13.4" height="13.4" fill="#fafafa" stroke="#2a2a2a" stroke-width="1.1"/><path d="M3.2,14L6.6,5.6L10,14M4.4,11.2H8.8" fill="none" stroke="#1a1a1a" stroke-width="1.4"/><circle cx="11.8" cy="6" r="1.5" fill="none" stroke="#1a1a1a" stroke-width=".9"/><path d="M11.800000000000045,14.6H18.600000000000044L16.100000000000044,17.6V21.2H14.300000000000045V17.6z" fill="#a62cc8" stroke="#7a1a9a" stroke-width=".5"/></svg>
<svg style="left:797px;top:729px" width="22" height="24" viewBox="0 0 22 24" ><circle cx="9.2" cy="10.6" r="7.8" fill="#f4f4f4" stroke="#5a5a5a" stroke-width="1"/><path d="M9.2,10.6V2.8A7.8,7.8 0 0 0 1.4,10.6z" fill="#1a1a1a"/><path d="M9.2,10.6V18.4A7.8,7.8 0 0 0 17,10.6z" fill="#1a1a1a"/><path d="M12.6,14.6H19.4L16.9,17.6V21.2H15.1V17.6z" fill="#a62cc8" stroke="#7a1a9a" stroke-width=".5"/></svg>
<svg style="left:823.5px;top:729px" width="22" height="24" viewBox="0 0 22 24" ><path d="M1,7.8H12" stroke="#1a1a1a" stroke-width="1.3"/><rect x="12" y="4.4" width="7" height="7" fill="#5aa4cf" stroke="#1f6d9b" stroke-width="1"/><path d="M12.899999999999954,14.6H19.699999999999953L17.199999999999953,17.6V21.2H15.399999999999954V17.6z" fill="#a62cc8" stroke="#7a1a9a" stroke-width=".5"/></svg>
<svg style="left:851px;top:729px" width="22" height="24" viewBox="0 0 22 24" ><path d="M1,7.8H19" stroke="#1a1a1a" stroke-width="1.3"/><rect x="6.6" y="4.4" width="7" height="7" fill="#5aa4cf" stroke="#1f6d9b" stroke-width="1"/><path d="M11.999999999999977,14.6H18.799999999999976L16.299999999999976,17.6V21.2H14.499999999999977V17.6z" fill="#a62cc8" stroke="#7a1a9a" stroke-width=".5"/></svg>
<svg style="left:878px;top:729px" width="22" height="24" viewBox="0 0 22 24" ><rect x="1.4" y="3.4" width="13" height="13" fill="#5aa4cf" stroke="#1f6d9b" stroke-width="1"/><path d="M8,6.6L13,3.6L18,6.6L18,11.0L13,14.0L8,11.0zM8,6.6L13,11.0L18,6.6M13,3.6L13,11.0M8,11.0H18M13,11.0V14.0" fill="#f4f4f4" stroke="#2a2a2a" stroke-width=".7" stroke-linejoin="round"/><path d="M12.6,14.6H19.4L16.9,17.6V21.2H15.1V17.6z" fill="#a62cc8" stroke="#7a1a9a" stroke-width=".5"/></svg>
<svg style="left:907px;top:729px" width="22" height="24" viewBox="0 0 22 24" ><path d="M2.8,2.6V20.6" stroke="#1f6d9b" stroke-width="1.6"/><path d="M6.6,6.6L11.6,3.6L16.6,6.6L16.6,11.0L11.6,14.0L6.6,11.0zM6.6,6.6L11.6,11.0L16.6,6.6M11.6,3.6L11.6,11.0M6.6,11.0H16.6M11.6,11.0V14.0" fill="#f4f4f4" stroke="#2a2a2a" stroke-width=".7" stroke-linejoin="round"/><path d="M10.1,14.6H16.9L14.4,17.6V21.2H12.6V17.6z" fill="#a62cc8" stroke="#7a1a9a" stroke-width=".5"/></svg>
<svg style="left:933px;top:729px" width="22" height="24" viewBox="0 0 22 24" ><circle cx="3.4" cy="7.4" r="2.4" fill="#5aa4cf" stroke="#1f6d9b" stroke-width="1"/><path d="M8,6.6L13,3.6L18,6.6L18,11.0L13,14.0L8,11.0zM8,6.6L13,11.0L18,6.6M13,3.6L13,11.0M8,11.0H18M13,11.0V14.0" fill="#f4f4f4" stroke="#2a2a2a" stroke-width=".7" stroke-linejoin="round"/><path d="M11.800000000000045,14.6H18.600000000000044L16.100000000000044,17.6V21.2H14.300000000000045V17.6z" fill="#a62cc8" stroke="#7a1a9a" stroke-width=".5"/></svg>
<div style="left:963px;top:726px;width:1px;height:29px;background:#8a8a8a;"></div>
<!-- status bar -->
<div style="left:818px;top:759px;width:1px;height:16px;background:#d2d2d2;"></div>
<div style="left:826px;top:759px;width:1px;height:16px;background:#d2d2d2;"></div>
<div style="left:897px;top:759px;width:1px;height:16px;background:#d2d2d2;"></div>
<div style="left:913px;top:759px;width:1px;height:16px;background:#d2d2d2;"></div>
<svg style="left:999px;top:764.5px" width="7" height="5" viewBox="0 0 7 5" ><path d="M0.4,4.4H6.6L3.5,0.6z" fill="#222"/></svg>
<svg style="left:1072px;top:759px" width="17" height="16" viewBox="0 0 17 16" ><path d="M1,5.6L8.6,1L16,6.4L8.4,11.6z" fill="#fafafa" stroke="#3a3a3a" stroke-width="1" stroke-linejoin="round"/><path d="M1,5.6V8.6L8.4,14.6L16,9.4V6.4" fill="#e0e0e0" stroke="#3a3a3a" stroke-width="1" stroke-linejoin="round"/><ellipse cx="8.6" cy="6.2" rx="2.8" ry="1.8" fill="none" stroke="#3a3a3a" stroke-width=".9"/></svg>
<div style="left:1106px;top:771px;width:2px;height:2px;background:#bcbcbc;"></div>
<div style="left:1103px;top:771px;width:2px;height:2px;background:#bcbcbc;"></div>
<div style="left:1100px;top:771px;width:2px;height:2px;background:#bcbcbc;"></div>
<div style="left:1106px;top:768px;width:2px;height:2px;background:#bcbcbc;"></div>
<div style="left:1103px;top:768px;width:2px;height:2px;background:#bcbcbc;"></div>
<div style="left:1106px;top:765px;width:2px;height:2px;background:#bcbcbc;"></div>
<!-- text labels -->
<span class="t" style="left:184.5px;top:15.5px;font-size:11.6px;letter-spacing:-0.35px;">File</span>
<span class="t" style="left:218.3px;top:15.5px;font-size:11.6px;letter-spacing:0.05px;">Edit</span>
<span class="t" style="left:254.0px;top:15.5px;font-size:11.6px;letter-spacing:-0.16px;">View</span>
<span class="t" style="left:295.0px;top:15.5px;font-size:11.6px;letter-spacing:-0.05px;">Insert</span>
<span class="t" style="left:339.5px;top:15.5px;font-size:11.6px;letter-spacing:-0.02px;">Tools</span>
<span class="t" style="left:382.0px;top:15.5px;font-size:11.6px;letter-spacing:0.54px;">Window</span>
<span class="t" style="left:442.0px;top:15.5px;font-size:11.6px;letter-spacing:-0.14px;">Help</span>
<span class="t" style="left:888.0px;top:15.5px;font-size:11.6px;letter-spacing:-0.60px;">CyberTr...</span>
<span class="t" style="left:12.6px;top:69.0px;font-size:11.6px;letter-spacing:-0.44px;">Sketch</span>
<span class="t" style="left:69.3px;top:69.0px;font-size:11.6px;letter-spacing:-0.38px;">Smart</span>
<span class="t" style="left:56.7px;top:82.0px;font-size:11.6px;letter-spacing:-0.06px;">Dimension</span>
<span class="t" style="left:282.6px;top:69.0px;font-size:11.6px;color:#a8a8a8;letter-spacing:-0.94px;">Trim</span>
<span class="t" style="left:273.8px;top:82.0px;font-size:11.6px;color:#a8a8a8;letter-spacing:-0.19px;">Entities</span>
<span class="t" style="left:321.7px;top:69.0px;font-size:11.6px;letter-spacing:-0.30px;">Convert</span>
<span class="t" style="left:322.4px;top:82.0px;font-size:11.6px;letter-spacing:-0.12px;">Entities</span>
<span class="t" style="left:374.6px;top:76.0px;font-size:11.6px;color:#a8a8a8;letter-spacing:-0.09px;">Offset</span>
<span class="t" style="left:371.6px;top:89.0px;font-size:11.6px;color:#a8a8a8;letter-spacing:-0.13px;">Entities</span>
<span class="t" style="left:422.5px;top:76.0px;font-size:11.6px;letter-spacing:0.05px;">Offset</span>
<span class="t" style="left:430.5px;top:89.0px;font-size:11.6px;letter-spacing:-0.68px;">On</span>
<span class="t" style="left:419.4px;top:102.0px;font-size:11.6px;letter-spacing:-0.41px;">Surface</span>
<span class="t" style="left:490.3px;top:49.5px;font-size:11.6px;color:#a8a8a8;letter-spacing:0.06px;">Mirror Entities</span>
<span class="t" style="left:490.3px;top:76.0px;font-size:11.6px;color:#a8a8a8;letter-spacing:-0.21px;">Linear Sketch Pattern</span>
<span class="t" style="left:490.3px;top:102.0px;font-size:11.6px;color:#a8a8a8;letter-spacing:-0.11px;">Move Entities</span>
<span class="t" style="left:644.0px;top:69.0px;font-size:11.6px;color:#a8a8a8;letter-spacing:-0.08px;">Display/Delete</span>
<span class="t" style="left:657.2px;top:82.0px;font-size:11.6px;color:#a8a8a8;letter-spacing:-0.12px;">Relations</span>
<span class="t" style="left:728.0px;top:76.0px;font-size:11.6px;color:#a8a8a8;letter-spacing:-0.31px;">Repair</span>
<span class="t" style="left:728.0px;top:89.0px;font-size:11.6px;color:#a8a8a8;letter-spacing:-0.31px;">Sketch</span>
<span class="t" style="left:776.0px;top:69.0px;font-size:11.6px;color:#a8a8a8;letter-spacing:-0.25px;">Quick</span>
<span class="t" style="left:776.0px;top:82.0px;font-size:11.6px;color:#a8a8a8;letter-spacing:-0.64px;">Snaps</span>
<span class="t" style="left:820.8px;top:76.0px;font-size:11.6px;letter-spacing:-0.02px;">Rapid</span>
<span class="t" style="left:819.5px;top:89.0px;font-size:11.6px;letter-spacing:-0.36px;">Sketch</span>
<span class="t" style="left:863.0px;top:76.0px;font-size:11.6px;letter-spacing:0.02px;">Instant2D</span>
<span class="t" style="left:927.0px;top:76.0px;font-size:11.6px;color:#a8a8a8;letter-spacing:-0.21px;">Shaded</span>
<span class="t" style="left:930.4px;top:89.0px;font-size:11.6px;color:#a8a8a8;letter-spacing:-0.36px;">Sketch</span>
<span class="t" style="left:923.6px;top:102.0px;font-size:11.6px;color:#a8a8a8;letter-spacing:0.02px;">Contours</span>
<span class="t" style="left:9.0px;top:128.5px;font-size:11.6px;letter-spacing:-0.22px;">Features</span>
<span class="t" style="left:68.8px;top:128.5px;font-size:11.8px;letter-spacing:0.57px;-webkit-text-stroke:.45px #000;">Sketch</span>
<span class="t" style="left:125.1px;top:128.5px;font-size:11.6px;letter-spacing:0.22px;">Weldments</span>
<span class="t" style="left:201.3px;top:128.5px;font-size:11.6px;letter-spacing:-0.18px;">Evaluate</span>
<span class="t" style="left:261.0px;top:128.5px;font-size:11.6px;letter-spacing:0.10px;">MBD Dimensions</span>
<span class="t" style="left:367.5px;top:128.5px;font-size:11.6px;letter-spacing:-0.17px;">SOLIDWORKS Add-Ins</span>
<span class="t" style="left:501.0px;top:128.5px;font-size:11.6px;letter-spacing:0.21px;">Flow Simulation</span>
<span class="t" style="left:602.0px;top:128.5px;font-size:11.6px;letter-spacing:0.03px;">Analysis Preparation</span>
<span class="t" style="left:51.0px;top:227.5px;font-size:11.6px;letter-spacing:0.22px;">Imported1</span>
<span class="t" style="left:51.0px;top:249.5px;font-size:11.6px;letter-spacing:0.27px;">Imported3</span>
<span class="t" style="left:51.0px;top:271.5px;font-size:11.6px;letter-spacing:0.27px;">Imported2</span>
<span class="t" style="left:51.0px;top:293.5px;font-size:11.6px;letter-spacing:0.30px;">Imported4</span>
<span class="t" style="left:51.0px;top:315.5px;font-size:11.6px;letter-spacing:0.27px;">Imported5</span>
<span class="t" style="left:51.0px;top:337.5px;font-size:11.6px;letter-spacing:0.27px;">Imported6</span>
<span class="t" style="left:51.0px;top:359.5px;font-size:11.6px;letter-spacing:-0.30px;">DeleteFace1</span>
<span class="t" style="left:51.0px;top:381.5px;font-size:11.6px;letter-spacing:-0.24px;">Sketch1</span>
<span class="t" style="left:51.0px;top:403.5px;font-size:11.6px;">Coordinate System1</span>
<span class="t" style="left:51.0px;top:425.5px;font-size:11.6px;letter-spacing:0.03px;">Coordinate System2</span>
<span class="t" style="left:51.0px;top:447.5px;font-size:11.6px;letter-spacing:-0.23px;">Boss-Extrude1</span>
<span class="t" style="left:51.0px;top:469.5px;font-size:11.6px;letter-spacing:-0.05px;">Split Line1</span>
<span class="t" style="left:51.0px;top:491.5px;font-size:11.6px;letter-spacing:-0.01px;">Split Line2</span>
<span class="t" style="left:51.0px;top:513.5px;font-size:11.6px;color:#8c8c8c;letter-spacing:0.06px;">Body-Delete/Keep 1</span>
<span class="t" style="left:51.0px;top:535.5px;font-size:11.6px;color:#8c8c8c;letter-spacing:-0.27px;">Plane1</span>
<span class="t" style="left:51.0px;top:557.5px;font-size:11.6px;color:#8c8c8c;letter-spacing:0.08px;">Body-Delete/Keep 2</span>
<span class="t" style="left:51.0px;top:579.5px;font-size:11.6px;color:#8c8c8c;letter-spacing:0.04px;">Loft1</span>
<span class="t" style="left:51.0px;top:601.5px;font-size:11.6px;color:#8c8c8c;letter-spacing:0.25px;">Mirror1</span>
<span class="t" style="left:51.0px;top:623.5px;font-size:11.6px;color:#8c8c8c;letter-spacing:0.31px;">Mirror3</span>
<span class="t" style="left:51.0px;top:645.5px;font-size:11.6px;letter-spacing:-0.18px;">Plane2</span>
<span class="t" style="left:51.0px;top:667.5px;font-size:11.6px;color:#8c8c8c;letter-spacing:0.08px;">Body-Delete/Keep 3</span>
<span class="t" style="left:241.5px;top:690.0px;font-size:11.6px;font-weight:700;letter-spacing:0.55px;">*Left</span>
<span class="t" style="left:267.2px;top:605.6px;font-size:10.5px;color:#1c7a1c;">Y</span>
<span class="t" style="left:301.2px;top:641.6px;font-size:10.5px;color:#1c1cf0;">Z</span>
<span class="t" style="left:81.0px;top:707.0px;font-size:11.8px;letter-spacing:0.33px;-webkit-text-stroke:.45px #000;">Model</span>
<span class="t" style="left:135.0px;top:707.0px;font-size:11.6px;letter-spacing:-0.18px;">3D Views</span>
<span class="t" style="left:202.5px;top:707.0px;font-size:11.6px;letter-spacing:0.20px;">Motion Study 1</span>
<span class="t" style="left:2.5px;top:758.5px;font-size:11.6px;letter-spacing:-0.09px;">CyberTruck3</span>
<span class="t" style="left:830.4px;top:758.5px;font-size:11.6px;letter-spacing:-0.03px;">Editing Part</span>
<span class="t" style="left:945.7px;top:758.5px;font-size:11.6px;letter-spacing:-0.19px;">MMGS</span>
</div>
</body></html>
